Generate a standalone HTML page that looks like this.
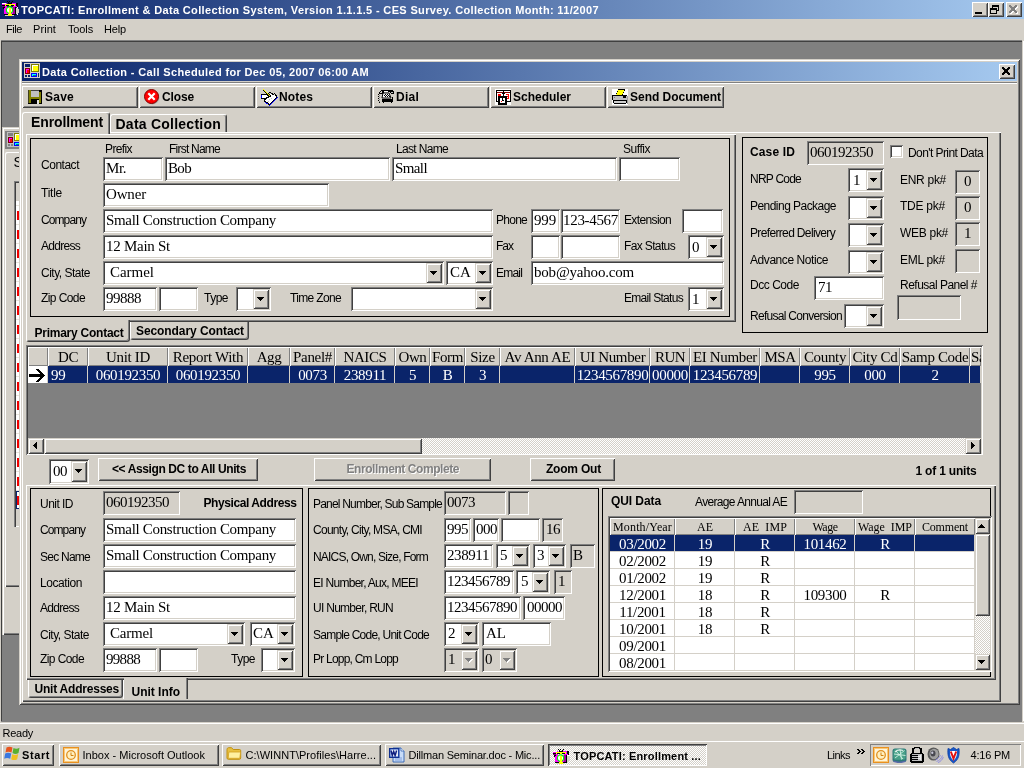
<!DOCTYPE html>
<html><head><meta charset="utf-8"><title>TOPCATI</title>
<style>
html,body{margin:0;padding:0;}
body{width:1024px;height:768px;overflow:hidden;position:relative;background:#d4d0c8;font-family:'Liberation Sans',sans-serif;font-size:12px;color:#000;}
div,span,svg{position:absolute;box-sizing:border-box;}
span{white-space:pre;}
.a{font-family:'Liberation Sans',sans-serif;}
.b{font-family:'Liberation Serif',serif;}
</style></head>
<body>
<div id="root" style="left:0;top:0;width:1024px;height:768px;will-change:transform;">
<div style="left:0px;top:0px;width:1024px;height:19px;background:linear-gradient(90deg,#0a246a 0%,#a6caf0 100%);"></div>
<span class="a" style="left:21px;top:4px;line-height:12px;font-size:11px;font-weight:700;color:#fff;letter-spacing:0.348px;">TOPCATI: Enrollment &amp; Data Collection System, Version 1.1.1.5 - CES Survey. Collection Month: 11/2007</span>
<div style="left:972px;top:2px;width:16px;height:15px;background:#d4d0c8;box-shadow:inset 1px 1px 0 #ffffff,inset -1px -1px 0 #404040,inset 2px 2px 0 #d4d0c8,inset -2px -2px 0 #808080;"></div>
<div style="left:988px;top:2px;width:16px;height:15px;background:#d4d0c8;box-shadow:inset 1px 1px 0 #ffffff,inset -1px -1px 0 #404040,inset 2px 2px 0 #d4d0c8,inset -2px -2px 0 #808080;"></div>
<div style="left:1006px;top:2px;width:16px;height:15px;background:#d4d0c8;box-shadow:inset 1px 1px 0 #ffffff,inset -1px -1px 0 #404040,inset 2px 2px 0 #d4d0c8,inset -2px -2px 0 #808080;"></div>
<div style="left:975px;top:12px;width:7px;height:2px;background:#000;"></div>
<svg style="left:990px;top:5px" width="9" height="9" shape-rendering="crispEdges"><rect x="2" y="0" width="7" height="1" fill="#000"/><rect x="2" y="1" width="7" height="1" fill="#000"/><rect x="2" y="2" width="1" height="1" fill="#000"/><rect x="8" y="2" width="1" height="1" fill="#000"/><rect x="0" y="3" width="7" height="1" fill="#000"/><rect x="8" y="3" width="1" height="1" fill="#000"/><rect x="0" y="4" width="7" height="1" fill="#000"/><rect x="8" y="4" width="1" height="1" fill="#000"/><rect x="0" y="5" width="1" height="1" fill="#000"/><rect x="6" y="5" width="3" height="1" fill="#000"/><rect x="0" y="6" width="1" height="1" fill="#000"/><rect x="6" y="6" width="1" height="1" fill="#000"/><rect x="0" y="7" width="1" height="1" fill="#000"/><rect x="6" y="7" width="1" height="1" fill="#000"/><rect x="0" y="8" width="7" height="1" fill="#000"/></svg>
<svg style="left:1010px;top:6px" width="8" height="8" shape-rendering="crispEdges"><rect x="0" y="0" width="2" height="1" fill="#fff"/><rect x="6" y="0" width="2" height="1" fill="#fff"/><rect x="0" y="1" width="3" height="1" fill="#fff"/><rect x="5" y="1" width="3" height="1" fill="#fff"/><rect x="1" y="2" width="6" height="1" fill="#fff"/><rect x="2" y="3" width="4" height="1" fill="#fff"/><rect x="2" y="4" width="4" height="1" fill="#fff"/><rect x="1" y="5" width="6" height="1" fill="#fff"/><rect x="0" y="6" width="3" height="1" fill="#fff"/><rect x="5" y="6" width="3" height="1" fill="#fff"/><rect x="0" y="7" width="2" height="1" fill="#fff"/><rect x="6" y="7" width="2" height="1" fill="#fff"/></svg>
<svg style="left:1009px;top:5px" width="8" height="8" shape-rendering="crispEdges"><rect x="0" y="0" width="2" height="1" fill="#808080"/><rect x="6" y="0" width="2" height="1" fill="#808080"/><rect x="0" y="1" width="3" height="1" fill="#808080"/><rect x="5" y="1" width="3" height="1" fill="#808080"/><rect x="1" y="2" width="6" height="1" fill="#808080"/><rect x="2" y="3" width="4" height="1" fill="#808080"/><rect x="2" y="4" width="4" height="1" fill="#808080"/><rect x="1" y="5" width="6" height="1" fill="#808080"/><rect x="0" y="6" width="3" height="1" fill="#808080"/><rect x="5" y="6" width="3" height="1" fill="#808080"/><rect x="0" y="7" width="2" height="1" fill="#808080"/><rect x="6" y="7" width="2" height="1" fill="#808080"/></svg>
<div style="left:0px;top:19px;width:1024px;height:21px;background:#d4d0c8;"></div>
<span class="a" style="left:6px;top:23px;line-height:12px;font-size:11px;letter-spacing:-0.434px;">File</span>
<span class="a" style="left:33px;top:23px;line-height:12px;font-size:11px;letter-spacing:0.075px;">Print</span>
<span class="a" style="left:68px;top:23px;line-height:12px;font-size:11px;letter-spacing:-0.138px;">Tools</span>
<span class="a" style="left:104px;top:23px;line-height:12px;font-size:11px;letter-spacing:-0.156px;">Help</span>
<div style="left:0px;top:40px;width:1024px;height:682px;background:#808080;"></div>
<div style="left:0px;top:40px;width:1px;height:682px;background:#d4d0c8;"></div>
<div style="left:1px;top:41px;width:1021px;height:1px;background:#404040;"></div>
<div style="left:1px;top:41px;width:1px;height:680px;background:#404040;"></div>
<div style="left:1022px;top:40px;width:2px;height:682px;background:#d4d0c8;"></div>
<div style="left:1023px;top:41px;width:1px;height:680px;background:#ffffff;"></div>
<div style="left:0px;top:722px;width:1024px;height:20px;background:#d4d0c8;"></div>
<div style="left:0px;top:723px;width:1024px;height:1px;background:#ffffff;"></div>
<span class="a" style="left:2.5px;top:727px;line-height:12px;font-size:11px;letter-spacing:-0.259px;">Ready</span>
<div style="left:0px;top:740px;width:1024px;height:28px;background:#d4d0c8;"></div>
<div style="left:0px;top:741px;width:1024px;height:1px;background:#ffffff;"></div>
<div style="left:2px;top:744px;width:52px;height:22px;background:#d4d0c8;box-shadow:inset 1px 1px 0 #ffffff,inset -1px -1px 0 #404040,inset 2px 2px 0 #d4d0c8,inset -2px -2px 0 #808080;"></div>
<span class="a" style="left:22px;top:749px;line-height:12px;font-size:11px;font-weight:700;letter-spacing:0.588px;">Start</span>
<div style="left:59px;top:744px;width:160px;height:22px;background:#d4d0c8;box-shadow:inset 1px 1px 0 #ffffff,inset -1px -1px 0 #404040,inset 2px 2px 0 #d4d0c8,inset -2px -2px 0 #808080;"></div>
<span class="a" style="left:82.5px;top:749px;line-height:12px;font-size:11px;letter-spacing:0.009px;">Inbox - Microsoft Outlook</span>
<div style="left:222px;top:744px;width:159px;height:22px;background:#d4d0c8;box-shadow:inset 1px 1px 0 #ffffff,inset -1px -1px 0 #404040,inset 2px 2px 0 #d4d0c8,inset -2px -2px 0 #808080;"></div>
<span class="a" style="left:245.5px;top:749px;line-height:12px;font-size:11px;letter-spacing:0.035px;">C:\WINNT\Profiles\Harre...</span>
<div style="left:385px;top:744px;width:159px;height:22px;background:#d4d0c8;box-shadow:inset 1px 1px 0 #ffffff,inset -1px -1px 0 #404040,inset 2px 2px 0 #d4d0c8,inset -2px -2px 0 #808080;"></div>
<span class="a" style="left:408.5px;top:749px;line-height:12px;font-size:11px;letter-spacing:-0.194px;">Dillman Seminar.doc - Mic...</span>
<div style="left:548px;top:744px;width:159px;height:22px;background-color:#fff;background-image:linear-gradient(45deg,#d4d0c8 25%,transparent 25%,transparent 75%,#d4d0c8 75%),linear-gradient(45deg,#d4d0c8 25%,transparent 25%,transparent 75%,#d4d0c8 75%);background-size:2px 2px;background-position:0 0,1px 1px;box-shadow:inset 1px 1px 0 #404040,inset -1px -1px 0 #ffffff,inset 2px 2px 0 #808080;"></div>
<span class="a" style="left:573.5px;top:750px;line-height:12px;font-size:11px;font-weight:700;letter-spacing:0.167px;">TOPCATI: Enrollment ...</span>
<span class="a" style="left:827px;top:749px;line-height:12px;font-size:11px;letter-spacing:-0.537px;">Links</span>
<svg style="left:857px;top:749px" width="9" height="5" shape-rendering="crispEdges"><rect x="0" y="0" width="2" height="1" fill="#000"/><rect x="4" y="0" width="2" height="1" fill="#000"/><rect x="1" y="1" width="2" height="1" fill="#000"/><rect x="5" y="1" width="2" height="1" fill="#000"/><rect x="2" y="2" width="2" height="1" fill="#000"/><rect x="6" y="2" width="2" height="1" fill="#000"/><rect x="1" y="3" width="2" height="1" fill="#000"/><rect x="5" y="3" width="2" height="1" fill="#000"/><rect x="0" y="4" width="2" height="1" fill="#000"/><rect x="4" y="4" width="2" height="1" fill="#000"/></svg>
<div style="left:870px;top:744px;width:151px;height:22px;box-shadow:inset 1px 1px 0 #808080,inset -1px -1px 0 #ffffff;"></div>
<span class="a" style="left:970.5px;top:749px;line-height:12px;font-size:11px;letter-spacing:-0.21px;">4:16 PM</span>
<svg style="left:4px;top:746px" width="16" height="15" viewBox="0 0 16 15"><path d="M2.5 1.5c2-1.2 4-1 6 0l-1 5c-2-1-4-1.2-6 0z" fill="#e8541c"/><path d="M9.5 2c2 1 4 1 6-.3l-1 5.3c-2 1.2-4 1.2-6 0z" fill="#58b030"/><path d="M1.2 7.5c2-1.2 4-1 6 0l-1 5.3c-2-1-4-1.2-6 0z" fill="#3a78e0"/><path d="M8.2 8.2c2 1 4 1 6-.3l-1 5.3c-2 1.2-4 1.2-6 0z" fill="#f0c020"/></svg>
<svg style="left:63px;top:747px" width="16" height="16" viewBox="0 0 16 16"><rect x="0" y="0" width="16" height="16" fill="#e89020"/><rect x="1" y="1" width="14" height="14" fill="#f8c878"/><rect x="2" y="2" width="12" height="12" fill="#fff4d8"/><circle cx="8" cy="8" r="4.3" fill="#fff0c0" stroke="#e09020" stroke-width="1.3"/><path d="M8 5.5v3h2.5" stroke="#d08010" stroke-width="1" fill="none"/></svg>
<svg style="left:226px;top:747px" width="16" height="14" viewBox="0 0 16 14"><path d="M1 2.5c0-1 .6-1.8 1.6-1.8h3l1.6 1.8h6.3c.8 0 1.2.5 1.2 1.2v7.3c0 .8-.5 1.3-1.3 1.3h-11c-.9 0-1.4-.5-1.4-1.300z" fill="#e8c040" stroke="#c09010" stroke-width="1"/><path d="M2.8 5h11.800l-.8 6.300h-11.600z" fill="#fff0a0" stroke="#d0a020" stroke-width=".8"/></svg>
<svg style="left:389px;top:747px" width="16" height="16" viewBox="0 0 16 16"><path d="M4 1h8l3 3v11h-11z" fill="#c8dcf8" stroke="#3060b0" stroke-width=".9"/><path d="M12 1v3h3" fill="#fff" stroke="#3060b0" stroke-width=".8"/><path d="M6 11h7M6 13h7" stroke="#7090d0" stroke-width=".8"/><rect x=".5" y="1.5" width="9.500" height="9" fill="#2050c0" stroke="#103090" stroke-width="1"/><rect x="1.5" y="2.5" width="7.500" height="7" fill="#fff" opacity=".9"/><path d="M2 3.500l1.300 5 1.400-4 1.400 4 1.500-5" fill="none" stroke="#102080" stroke-width="1.500"/></svg>
<svg style="left:553px;top:749px" width="17" height="16" viewBox="0 0 17 16" shape-rendering="crispEdges"><path d="M5 0h1v1h-1zM7 0h1v1h-1zM10 0h1v1h-1zM6 1h1v1h-1zM9 1h1v1h-1zM6 2h4v1h-4z" fill="#000"/><rect x="0" y="2" width="5" height="4" fill="#ff00ff"/><rect x="0" y="2" width="4" height="1" fill="#fff"/><rect x="0" y="4" width="4" height="1" fill="#000"/><rect x="0" y="5" width="3" height="1" fill="#800080"/><rect x="10" y="2" width="5" height="3" fill="#ff00ff"/><rect x="14" y="2" width="2" height="4" fill="#000"/><rect x="11" y="5" width="4" height="1" fill="#ff00ff"/><rect x="2" y="6" width="10" height="7" fill="#ff00ff"/><rect x="11" y="6" width="2" height="7" fill="#a000a0"/><path d="M1 6h2v1h-1v1h-1z" fill="#000"/><rect x="3" y="3" width="10" height="2" fill="#ffff00"/><rect x="4" y="4" width="3" height="1" fill="#000"/><rect x="9" y="4" width="3" height="1" fill="#000"/><rect x="2" y="13" width="12" height="1" fill="#000"/><rect x="13" y="6" width="1" height="7" fill="#000"/><path d="M14 7h2v1h1v4h-1v1h-2z" fill="#d4d0c8"/><path d="M15 6h1v1h-1zM15 13h1v1h-1z" fill="#fff"/><circle cx="7.5" cy="9" r="3.1" fill="#fff" stroke="#00ff00" stroke-width="1.1" shape-rendering="auto"/><rect x="7" y="6.5" width="2" height="8" fill="#ffff00"/><rect x="6" y="13" width="4" height="2" fill="#ffff00"/><rect x="3" y="14" width="3" height="1" fill="#d4d0c8"/><rect x="10" y="14" width="2" height="1" fill="#d4d0c8"/></svg>
<svg style="left:873px;top:747px" width="16" height="16" viewBox="0 0 16 16"><rect x="0" y="0" width="16" height="16" fill="#e89020"/><rect x="1" y="1" width="14" height="14" fill="#f8c878"/><rect x="2" y="2" width="12" height="12" fill="#fff4d8"/><circle cx="8" cy="8" r="4.3" fill="#fff0c0" stroke="#e09020" stroke-width="1.3"/><path d="M8 5.5v3h2.5" stroke="#d08010" stroke-width="1" fill="none"/></svg>
<svg style="left:892px;top:747.5px" width="15" height="15.5" viewBox="0 0 15 15.5"><rect x=".5" y=".5" width="14" height="13.500" rx="2.500" fill="#2c7878"/><rect x="1.500" y="1.200" width="12" height="10.500" rx="2" fill="#48a088"/><path d="M3 10l9.500-7.500M4 3l7 8M8 1.500l1.500 10M2 6l11.500 1.500" stroke="#e8fff4" stroke-width=".9" opacity=".85"/><path d="M3 4c2-2 5-2.500 8-1.500" stroke="#fff" stroke-width="1.200" fill="none" opacity=".8"/><path d="M1.500 12.500c4 1.500 8 1.500 12 0v1.500c-4 1.500-8 1.500-12 0z" fill="#5868a8"/></svg>
<svg style="left:910px;top:747px" width="14" height="16" shape-rendering="crispEdges"><rect x="4" y="0" width="6" height="1" fill="#000"/><rect x="2" y="1" width="3" height="1" fill="#000"/><rect x="5" y="1" width="4" height="1" fill="#c0c0c0"/><rect x="9" y="1" width="3" height="1" fill="#000"/><rect x="2" y="2" width="2" height="1" fill="#000"/><rect x="4" y="2" width="1" height="1" fill="#c0c0c0"/><rect x="9" y="2" width="1" height="1" fill="#c0c0c0"/><rect x="10" y="2" width="2" height="1" fill="#000"/><rect x="2" y="3" width="2" height="1" fill="#000"/><rect x="10" y="3" width="2" height="1" fill="#000"/><rect x="2" y="4" width="2" height="1" fill="#000"/><rect x="10" y="4" width="2" height="1" fill="#000"/><rect x="2" y="5" width="2" height="1" fill="#000"/><rect x="10" y="5" width="2" height="1" fill="#000"/><rect x="1" y="6" width="12" height="1" fill="#000"/><rect x="0" y="7" width="2" height="1" fill="#000"/><rect x="2" y="7" width="10" height="1" fill="#c0c0c0"/><rect x="12" y="7" width="2" height="1" fill="#000"/><rect x="0" y="8" width="8" height="1" fill="#000"/><rect x="8" y="8" width="2" height="1" fill="#c0c0c0"/><rect x="10" y="8" width="1" height="1" fill="#f0f0f0"/><rect x="11" y="8" width="1" height="1" fill="#c0c0c0"/><rect x="12" y="8" width="2" height="1" fill="#000"/><rect x="0" y="9" width="2" height="1" fill="#000"/><rect x="2" y="9" width="6" height="1" fill="#c0c0c0"/><rect x="8" y="9" width="3" height="1" fill="#f0f0f0"/><rect x="11" y="9" width="1" height="1" fill="#c0c0c0"/><rect x="12" y="9" width="2" height="1" fill="#000"/><rect x="0" y="10" width="8" height="1" fill="#000"/><rect x="8" y="10" width="2" height="1" fill="#c0c0c0"/><rect x="10" y="10" width="1" height="1" fill="#f0f0f0"/><rect x="11" y="10" width="1" height="1" fill="#c0c0c0"/><rect x="12" y="10" width="2" height="1" fill="#000"/><rect x="0" y="11" width="2" height="1" fill="#000"/><rect x="2" y="11" width="6" height="1" fill="#c0c0c0"/><rect x="8" y="11" width="3" height="1" fill="#f0f0f0"/><rect x="11" y="11" width="1" height="1" fill="#c0c0c0"/><rect x="12" y="11" width="2" height="1" fill="#000"/><rect x="0" y="12" width="8" height="1" fill="#000"/><rect x="8" y="12" width="2" height="1" fill="#c0c0c0"/><rect x="10" y="12" width="1" height="1" fill="#f0f0f0"/><rect x="11" y="12" width="1" height="1" fill="#c0c0c0"/><rect x="12" y="12" width="2" height="1" fill="#000"/><rect x="0" y="13" width="2" height="1" fill="#000"/><rect x="2" y="13" width="10" height="1" fill="#c0c0c0"/><rect x="12" y="13" width="2" height="1" fill="#000"/><rect x="0" y="14" width="14" height="1" fill="#000"/><rect x="1" y="15" width="12" height="1" fill="#000"/></svg>
<svg style="left:927px;top:747px" width="17" height="16" viewBox="0 0 17 16"><ellipse cx="6.500" cy="7" rx="6" ry="6.600" fill="#585858"/><ellipse cx="7" cy="7" rx="4.600" ry="5.300" fill="#a0a0a0"/><ellipse cx="6" cy="6.500" rx="2.500" ry="3" fill="#484850"/><ellipse cx="5.300" cy="5.800" rx="1.100" ry="1.300" fill="#c8c8d8"/><path d="M9.500 14.500c3-1 5-3 6-6M8.500 13c2-.8 4-2.500 5-5M11 15.600c2.500-1 4.500-3 5.300-5.500" fill="none" stroke="#8888e0" stroke-width=".9"/></svg>
<svg style="left:946.5px;top:746.5px" width="13" height="17" viewBox="0 0 13 17"><path d="M1 1.500l2.500 1 3-2 3 2 2.500-1c.5 6 0 11-5.500 14.500c-5.500-3.500-6-8.500-5.500-14.500z" fill="#1858c8" stroke="#0838a0" stroke-width=".8"/><path d="M3 4h7c.2 4-.5 7-3.500 9.500c-3-2.500-3.700-5.500-3.500-9.500z" fill="#fff"/><path d="M3.800 4.500l2.700 7 2.700-7" fill="none" stroke="#e01010" stroke-width="2"/></svg>
<div style="left:2px;top:127px;width:20px;height:508px;background:#d4d0c8;box-shadow:inset 1px 1px 0 #d4d0c8,inset 2px 2px 0 #ffffff,inset 0 -1px 0 #404040,inset 0 -2px 0 #808080;"></div>
<div style="left:5px;top:131px;width:16px;height:18px;background:#808080;"></div>
<div style="left:7px;top:132px;width:14px;height:15px;background:#c0c0c0;"></div>
<svg style="left:7px;top:132px" width="16" height="15" viewBox="0 0 16 15" shape-rendering="crispEdges"><rect x="0" y="0" width="16" height="15" fill="#c0c0c0"/><rect x="1" y="1" width="5" height="3" fill="#808080"/><rect x="7" y="1" width="8" height="8" fill="#808000"/><rect x="8" y="2" width="6" height="6" fill="#ffff00"/><path d="M8 2h6v1h-5v5h-1z" fill="#fff"/><rect x="1" y="5" width="5" height="6" fill="#800000"/><rect x="2" y="6" width="3" height="4" fill="#ff0000"/><path d="M2 6h3v1h-2v3h-1z" fill="#ff00ff"/><rect x="7" y="10" width="6" height="4" fill="#0000ff"/><rect x="8" y="11" width="4" height="2" fill="#008080"/><path d="M8 11h4v1h-3v1h-1z" fill="#00ffff"/><rect x="1" y="12" width="2" height="2" fill="#808080"/><rect x="4" y="12" width="2" height="2" fill="#808080"/><rect x="14" y="10" width="1" height="4" fill="#808080"/></svg>
<div style="left:5px;top:152px;width:16px;height:435px;box-shadow:inset 1px 1px 0 #ffffff,inset 0 -1px 0 #404040,inset 0 -2px 0 #808080;border-radius:2px 0 0 0;"></div>
<span class="a" style="left:13.5px;top:154px;line-height:16px;font-size:14px;">S</span>
<div style="left:14px;top:181px;width:8px;height:346px;background:#d4d0c8;box-shadow:inset 1px 1px 0 #808080,inset 2px 2px 0 #404040,inset 0 -1px 0 #ffffff;"></div>
<div style="left:16px;top:201px;width:5px;height:308px;background:#fff;"></div>
<div style="left:16px;top:205px;width:5px;height:1px;background:#e8e4dc;"></div>
<div style="left:17px;top:211px;width:2px;height:9px;background:#f00000;"></div>
<div style="left:16px;top:224px;width:5px;height:1px;background:#e8e4dc;"></div>
<div style="left:17px;top:230px;width:2px;height:9px;background:#f00000;"></div>
<div style="left:16px;top:243px;width:5px;height:1px;background:#e8e4dc;"></div>
<div style="left:17px;top:249px;width:2px;height:9px;background:#f00000;"></div>
<div style="left:16px;top:262px;width:5px;height:1px;background:#e8e4dc;"></div>
<div style="left:17px;top:268px;width:2px;height:9px;background:#f00000;"></div>
<div style="left:16px;top:281px;width:5px;height:1px;background:#e8e4dc;"></div>
<div style="left:17px;top:287px;width:2px;height:9px;background:#f00000;"></div>
<div style="left:16px;top:300px;width:5px;height:1px;background:#e8e4dc;"></div>
<div style="left:17px;top:306px;width:2px;height:9px;background:#f00000;"></div>
<div style="left:16px;top:319px;width:5px;height:1px;background:#e8e4dc;"></div>
<div style="left:17px;top:325px;width:2px;height:9px;background:#f00000;"></div>
<div style="left:16px;top:338px;width:5px;height:1px;background:#e8e4dc;"></div>
<div style="left:17px;top:344px;width:2px;height:9px;background:#f00000;"></div>
<div style="left:16px;top:357px;width:5px;height:1px;background:#e8e4dc;"></div>
<div style="left:17px;top:363px;width:2px;height:9px;background:#f00000;"></div>
<div style="left:16px;top:376px;width:5px;height:1px;background:#e8e4dc;"></div>
<div style="left:17px;top:382px;width:2px;height:9px;background:#f00000;"></div>
<div style="left:16px;top:395px;width:5px;height:1px;background:#e8e4dc;"></div>
<div style="left:17px;top:401px;width:2px;height:9px;background:#f00000;"></div>
<div style="left:16px;top:414px;width:5px;height:1px;background:#e8e4dc;"></div>
<div style="left:17px;top:420px;width:2px;height:9px;background:#f00000;"></div>
<div style="left:16px;top:433px;width:5px;height:1px;background:#e8e4dc;"></div>
<div style="left:17px;top:439px;width:2px;height:9px;background:#f00000;"></div>
<div style="left:16px;top:452px;width:5px;height:1px;background:#e8e4dc;"></div>
<div style="left:17px;top:458px;width:2px;height:9px;background:#f00000;"></div>
<div style="left:16px;top:471px;width:5px;height:1px;background:#e8e4dc;"></div>
<div style="left:17px;top:477px;width:2px;height:9px;background:#f00000;"></div>
<div style="left:16px;top:490px;width:5px;height:1px;background:#e8e4dc;"></div>
<div style="left:17px;top:496px;width:2px;height:9px;background:#f00000;"></div>
<div style="left:16px;top:491px;width:5px;height:18px;border:1px solid #0a246a;border-right:none;"></div>
<div style="left:19px;top:59px;width:1001px;height:646px;background:#d4d0c8;box-shadow:inset 1px 1px 0 #d4d0c8,inset -1px -1px 0 #404040,inset 2px 2px 0 #ffffff,inset -2px -2px 0 #808080;"></div>
<div style="left:22px;top:62px;width:995px;height:19px;background:linear-gradient(90deg,#0a246a 0%,#a6caf0 100%);"></div>
<span class="a" style="left:42px;top:66px;line-height:12px;font-size:11px;font-weight:700;color:#fff;letter-spacing:0.354px;">Data Collection - Call Scheduled for Dec 05, 2007 06:00 AM</span>
<div style="left:999px;top:64px;width:16px;height:15px;background:#d4d0c8;box-shadow:inset 1px 1px 0 #ffffff,inset -1px -1px 0 #404040,inset 2px 2px 0 #d4d0c8,inset -2px -2px 0 #808080;"></div>
<svg style="left:1002px;top:67px" width="8" height="8" shape-rendering="crispEdges"><rect x="0" y="0" width="2" height="1" fill="#000"/><rect x="6" y="0" width="2" height="1" fill="#000"/><rect x="0" y="1" width="3" height="1" fill="#000"/><rect x="5" y="1" width="3" height="1" fill="#000"/><rect x="1" y="2" width="6" height="1" fill="#000"/><rect x="2" y="3" width="4" height="1" fill="#000"/><rect x="2" y="4" width="4" height="1" fill="#000"/><rect x="1" y="5" width="6" height="1" fill="#000"/><rect x="0" y="6" width="3" height="1" fill="#000"/><rect x="5" y="6" width="3" height="1" fill="#000"/><rect x="0" y="7" width="2" height="1" fill="#000"/><rect x="6" y="7" width="2" height="1" fill="#000"/></svg>
<div style="left:22px;top:82px;width:995px;height:1px;background:#808080;"></div>
<div style="left:22px;top:83px;width:995px;height:1px;background:#ffffff;"></div>
<div style="left:22px;top:86px;width:116px;height:22px;background:#d4d0c8;box-shadow:inset 1px 1px 0 #ffffff,inset -1px -1px 0 #404040,inset 2px 2px 0 #d4d0c8,inset -2px -2px 0 #808080;"></div>
<span class="a" style="left:45px;top:90px;line-height:14px;font-size:12px;font-weight:700;letter-spacing:0.242px;">Save</span>
<div style="left:139px;top:86px;width:116px;height:22px;background:#d4d0c8;box-shadow:inset 1px 1px 0 #ffffff,inset -1px -1px 0 #404040,inset 2px 2px 0 #d4d0c8,inset -2px -2px 0 #808080;"></div>
<span class="a" style="left:162px;top:90px;line-height:14px;font-size:12px;font-weight:700;letter-spacing:-0.138px;">Close</span>
<div style="left:256px;top:86px;width:116px;height:22px;background:#d4d0c8;box-shadow:inset 1px 1px 0 #ffffff,inset -1px -1px 0 #404040,inset 2px 2px 0 #d4d0c8,inset -2px -2px 0 #808080;"></div>
<span class="a" style="left:279px;top:90px;line-height:14px;font-size:12px;font-weight:700;letter-spacing:0.131px;">Notes</span>
<div style="left:373px;top:86px;width:116px;height:22px;background:#d4d0c8;box-shadow:inset 1px 1px 0 #ffffff,inset -1px -1px 0 #404040,inset 2px 2px 0 #d4d0c8,inset -2px -2px 0 #808080;"></div>
<span class="a" style="left:396px;top:90px;line-height:14px;font-size:12px;font-weight:700;letter-spacing:0.246px;">Dial</span>
<div style="left:490px;top:86px;width:116px;height:22px;background:#d4d0c8;box-shadow:inset 1px 1px 0 #ffffff,inset -1px -1px 0 #404040,inset 2px 2px 0 #d4d0c8,inset -2px -2px 0 #808080;"></div>
<span class="a" style="left:513px;top:90px;line-height:14px;font-size:12px;font-weight:700;letter-spacing:-0.003px;">Scheduler</span>
<div style="left:607px;top:86px;width:117px;height:22px;background:#d4d0c8;box-shadow:inset 1px 1px 0 #ffffff,inset -1px -1px 0 #404040,inset 2px 2px 0 #d4d0c8,inset -2px -2px 0 #808080;"></div>
<span class="a" style="left:630px;top:90px;line-height:14px;font-size:12px;font-weight:700;letter-spacing:-0.026px;">Send Document</span>
<svg style="left:2px;top:1px" width="17" height="16" viewBox="0 0 17 16" shape-rendering="crispEdges"><path d="M5 0h1v1h-1zM7 0h1v1h-1zM10 0h1v1h-1zM6 1h1v1h-1zM9 1h1v1h-1zM6 2h4v1h-4z" fill="#000"/><rect x="0" y="2" width="5" height="4" fill="#ff00ff"/><rect x="0" y="2" width="4" height="1" fill="#fff"/><rect x="0" y="4" width="4" height="1" fill="#000"/><rect x="0" y="5" width="3" height="1" fill="#800080"/><rect x="10" y="2" width="5" height="3" fill="#ff00ff"/><rect x="14" y="2" width="2" height="4" fill="#000"/><rect x="11" y="5" width="4" height="1" fill="#ff00ff"/><rect x="2" y="6" width="10" height="7" fill="#ff00ff"/><rect x="11" y="6" width="2" height="7" fill="#a000a0"/><path d="M1 6h2v1h-1v1h-1z" fill="#000"/><rect x="3" y="3" width="10" height="2" fill="#ffff00"/><rect x="4" y="4" width="3" height="1" fill="#000"/><rect x="9" y="4" width="3" height="1" fill="#000"/><rect x="2" y="13" width="12" height="1" fill="#000"/><rect x="13" y="6" width="1" height="7" fill="#000"/><path d="M14 7h2v1h1v4h-1v1h-2z" fill="#d4d0c8"/><path d="M15 6h1v1h-1zM15 13h1v1h-1z" fill="#fff"/><circle cx="7.5" cy="9" r="3.1" fill="#fff" stroke="#00ff00" stroke-width="1.1" shape-rendering="auto"/><rect x="7" y="6.5" width="2" height="8" fill="#ffff00"/><rect x="6" y="13" width="4" height="2" fill="#ffff00"/><rect x="3" y="14" width="3" height="1" fill="#d4d0c8"/><rect x="10" y="14" width="2" height="1" fill="#d4d0c8"/></svg>
<svg style="left:24px;top:63px" width="16" height="15" viewBox="0 0 16 15" shape-rendering="crispEdges"><rect x="0" y="0" width="16" height="15" fill="#d4d0c8"/><rect x="1" y="1" width="5" height="3" fill="#0a246a"/><rect x="7" y="1" width="8" height="8" fill="#808000"/><rect x="8" y="2" width="6" height="6" fill="#ffff00"/><path d="M8 2h6v1h-5v5h-1z" fill="#fff"/><rect x="1" y="5" width="5" height="6" fill="#800000"/><rect x="2" y="6" width="3" height="4" fill="#ff0000"/><path d="M2 6h3v1h-2v3h-1z" fill="#ff00ff"/><rect x="7" y="10" width="6" height="4" fill="#0000ff"/><rect x="8" y="11" width="4" height="2" fill="#008080"/><path d="M8 11h4v1h-3v1h-1z" fill="#00ffff"/><rect x="1" y="12" width="2" height="2" fill="#0a246a"/><rect x="4" y="12" width="2" height="2" fill="#0a246a"/><rect x="14" y="10" width="1" height="4" fill="#0a246a"/></svg>
<svg style="left:28px;top:90px" width="14" height="14" viewBox="0 0 14 14" shape-rendering="crispEdges"><rect x="0" y="0" width="14" height="14" fill="#808000"/><rect x="0" y="0" width="1" height="14" fill="#404020"/><rect x="13" y="0" width="1" height="14" fill="#000"/><rect x="0" y="13" width="14" height="1" fill="#000"/><rect x="3" y="0" width="8" height="7" fill="#c0c0c0"/><rect x="3" y="0" width="8" height="1" fill="#404040"/><rect x="11" y="0" width="2" height="2" fill="#000"/><rect x="3" y="9" width="8" height="5" fill="#000"/><rect x="9" y="10" width="2" height="4" fill="#e0e0e0"/></svg>
<svg style="left:144px;top:89px" width="17" height="17" viewBox="0 0 17 17"><circle cx="8.4" cy="8.4" r="7" fill="#808080" opacity=".5"/><circle cx="7.5" cy="7.5" r="7" fill="#ff0000" stroke="#800000" stroke-width="1"/><path d="M4.3 4.3l6.4 6.4M10.7 4.3l-6.4 6.4" stroke="#fff" stroke-width="2.2"/></svg>
<svg style="left:260px;top:88px" width="19" height="18" shape-rendering="crispEdges"><rect x="3" y="1" width="1" height="1" fill="#ffff00"/><rect x="3" y="2" width="1" height="1" fill="#000"/><rect x="4" y="2" width="1" height="1" fill="#ffff00"/><rect x="4" y="3" width="1" height="1" fill="#000"/><rect x="5" y="3" width="1" height="1" fill="#ffff00"/><rect x="5" y="4" width="1" height="1" fill="#000"/><rect x="6" y="4" width="1" height="1" fill="#ffff00"/><rect x="9" y="4" width="2" height="1" fill="#000"/><rect x="6" y="5" width="1" height="1" fill="#000"/><rect x="7" y="5" width="1" height="1" fill="#ffff00"/><rect x="8" y="5" width="1" height="1" fill="#000"/><rect x="11" y="5" width="2" height="1" fill="#000"/><rect x="14" y="5" width="1" height="1" fill="#000"/><rect x="1" y="6" width="7" height="1" fill="#000"/><rect x="8" y="6" width="1" height="1" fill="#ffff00"/><rect x="9" y="6" width="1" height="1" fill="#000"/><rect x="10" y="6" width="2" height="1" fill="#fff"/><rect x="12" y="6" width="2" height="1" fill="#000"/><rect x="15" y="6" width="1" height="1" fill="#000"/><rect x="1" y="7" width="1" height="1" fill="#0000ff"/><rect x="2" y="7" width="5" height="1" fill="#fff"/><rect x="7" y="7" width="2" height="1" fill="#000"/><rect x="9" y="7" width="1" height="1" fill="#ffff00"/><rect x="10" y="7" width="1" height="1" fill="#000"/><rect x="11" y="7" width="4" height="1" fill="#fff"/><rect x="15" y="7" width="2" height="1" fill="#000"/><rect x="1" y="8" width="1" height="1" fill="#0000ff"/><rect x="2" y="8" width="6" height="1" fill="#fff"/><rect x="8" y="8" width="3" height="1" fill="#000"/><rect x="11" y="8" width="5" height="1" fill="#fff"/><rect x="16" y="8" width="1" height="1" fill="#000"/><rect x="1" y="9" width="1" height="1" fill="#0000ff"/><rect x="2" y="9" width="4" height="1" fill="#fff"/><rect x="6" y="9" width="3" height="1" fill="#000"/><rect x="9" y="9" width="7" height="1" fill="#fff"/><rect x="16" y="9" width="1" height="1" fill="#000"/><rect x="17" y="9" width="1" height="1" fill="#0000ff"/><rect x="1" y="10" width="6" height="1" fill="#000"/><rect x="7" y="10" width="4" height="1" fill="#fff"/><rect x="11" y="10" width="1" height="1" fill="#c0c0c0"/><rect x="12" y="10" width="3" height="1" fill="#fff"/><rect x="15" y="10" width="1" height="1" fill="#000"/><rect x="16" y="10" width="1" height="1" fill="#0000ff"/><rect x="4" y="11" width="2" height="1" fill="#000"/><rect x="6" y="11" width="3" height="1" fill="#fff"/><rect x="9" y="11" width="1" height="1" fill="#c0c0c0"/><rect x="10" y="11" width="4" height="1" fill="#fff"/><rect x="14" y="11" width="1" height="1" fill="#000"/><rect x="15" y="11" width="1" height="1" fill="#0000ff"/><rect x="4" y="12" width="1" height="1" fill="#000"/><rect x="5" y="12" width="8" height="1" fill="#fff"/><rect x="13" y="12" width="1" height="1" fill="#000"/><rect x="14" y="12" width="1" height="1" fill="#0000ff"/><rect x="4" y="13" width="2" height="1" fill="#000"/><rect x="6" y="13" width="2" height="1" fill="#fff"/><rect x="8" y="13" width="1" height="1" fill="#c0c0c0"/><rect x="9" y="13" width="3" height="1" fill="#fff"/><rect x="12" y="13" width="1" height="1" fill="#000"/><rect x="13" y="13" width="1" height="1" fill="#0000ff"/><rect x="5" y="14" width="1" height="1" fill="#0000ff"/><rect x="6" y="14" width="2" height="1" fill="#000"/><rect x="8" y="14" width="3" height="1" fill="#fff"/><rect x="11" y="14" width="1" height="1" fill="#000"/><rect x="12" y="14" width="1" height="1" fill="#0000ff"/><rect x="6" y="15" width="2" height="1" fill="#0000ff"/><rect x="8" y="15" width="1" height="1" fill="#000"/><rect x="9" y="15" width="1" height="1" fill="#fff"/><rect x="10" y="15" width="1" height="1" fill="#000"/><rect x="11" y="15" width="1" height="1" fill="#0000ff"/><rect x="8" y="16" width="2" height="1" fill="#000"/><rect x="10" y="16" width="1" height="1" fill="#0000ff"/><rect x="9" y="17" width="1" height="1" fill="#0000ff"/></svg>
<svg style="left:377px;top:89px" width="18" height="15" viewBox="0 0 18 15" shape-rendering="crispEdges"><path d="M6 1h7v2h-7z" fill="#000"/><path d="M2 3l3-2h2v3l-2 1h-3z" fill="#000"/><path d="M12 1h3l2 2v2h-3l-1-1z" fill="#000"/><rect x="7" y="2" width="4" height="1" fill="#fff"/><path d="M3 3l1-1h1v1l-1 1h-1z" fill="#d4d0c8"/><rect x="14" y="3" width="2" height="1" fill="#c0c0c0"/><path d="M6 4h6l2 5h-9z" fill="#fff" stroke="#000" stroke-width="1" shape-rendering="auto"/><path d="M8 5h1v1h-1zM10 5h1v1h-1zM7 6h1v1h-1zM9 6h1v1h-1zM11 6h1v1h-1zM8 7h1v1h-1zM10 7h1v1h-1zM12 7h1v1h-1z" fill="#000"/><rect x="5" y="10" width="11" height="3" fill="#000"/><rect x="15" y="8" width="1" height="3" fill="#000"/><rect x="6" y="13" width="1" height="1" fill="#000"/><rect x="14" y="13" width="1" height="1" fill="#000"/><path d="M1 5h1v1h-1zM1 7h1v1h-1zM1 9h1v1h-1zM1 11h1v1h-1zM2 13h1v1h-1z" fill="#000"/><path d="M2 6h1v1h-1zM2 8h1v1h-1zM2 10h1v1h-1zM2 12h1v1h-1z" fill="#808080"/></svg>
<svg style="left:495px;top:89px" width="16" height="16" viewBox="0 0 16 16" shape-rendering="crispEdges"><rect x="0" y="0" width="16" height="16" fill="#fff"/><rect x="1.5" y="1.5" width="14" height="11" fill="#fff" stroke="#000" stroke-width="1"/><rect x="2" y="3" width="13" height="1" fill="#800000"/><rect x="8" y="1" width="1" height="6" fill="#000"/><rect x="7" y="4" width="3" height="1" fill="#000"/><path d="M3 5h3v2h-3z" fill="#ff0000"/><path d="M11 5h3v5h-2v-1h1v-1h-1v-1h1v-1h-2z" fill="#ff0000"/><rect x="3" y="7" width="9" height="9" fill="#000"/><rect x="5" y="9" width="5" height="5" fill="#fff"/><path d="M7 9h1v2h1v1h-2z" fill="#000"/><rect x="6" y="12" width="1" height="1" fill="#ff0000"/></svg>
<svg style="left:612px;top:89px" width="16" height="16" viewBox="0 0 16 16" shape-rendering="crispEdges"><rect x="0" y="0" width="16" height="16" fill="#fff"/><path d="M6 0.5h6.5l-2 6h-6.5z" fill="#ffff00" shape-rendering="auto"/><rect x="6" y="0" width="7" height="1" fill="#000"/><rect x="12" y="1" width="1" height="1" fill="#000"/><path d="M5 2h1v1h-1zM4 4h1v1h-1zM11 3h1v1h-1zM10 5h1v1h-1z" fill="#000"/><rect x="0" y="6" width="15" height="1" fill="#000"/><rect x="0" y="6" width="1" height="5" fill="#000"/><rect x="1" y="7" width="14" height="4" fill="#c0c0c0"/><rect x="11" y="7" width="3" height="2" fill="#000"/><rect x="2" y="8" width="1" height="1" fill="#808080"/><rect x="1" y="11" width="14" height="1" fill="#000"/><rect x="1" y="12" width="1" height="2" fill="#000"/><rect x="14" y="11" width="1" height="3" fill="#000"/><rect x="2" y="12" width="12" height="2" fill="#d0d0d0"/><rect x="2" y="14" width="12" height="1" fill="#000"/><rect x="15" y="7" width="1" height="8" fill="#a0a0a0"/></svg>
<div style="left:22px;top:132px;width:979px;height:570px;background:#d4d0c8;box-shadow:inset 1px 1px 0 #ffffff,inset -1px -1px 0 #404040,inset -2px -2px 0 #808080;"></div>
<div style="left:22px;top:112px;width:88px;height:22px;background:#d4d0c8;border:1px solid;border-color:#ffffff #404040 #d4d0c8 #ffffff;border-bottom:none;border-radius:3px 3px 0 0;box-shadow:inset -1px 0 0 #808080;"></div>
<span class="a" style="left:31px;top:114px;line-height:16px;font-size:14px;font-weight:700;letter-spacing:-0.113px;">Enrollment</span>
<div style="left:110px;top:114px;width:117px;height:18px;background:#d4d0c8;border:1px solid;border-color:#ffffff #404040 #d4d0c8 #ffffff;border-bottom:none;border-radius:3px 3px 0 0;box-shadow:inset -1px 0 0 #808080;"></div>
<span class="a" style="left:115.5px;top:116px;line-height:16px;font-size:14px;font-weight:700;letter-spacing:0.24px;">Data Collection</span>
<div style="left:26px;top:134px;width:710px;height:188px;background:#d4d0c8;box-shadow:inset 1px 1px 0 #ffffff,inset -1px -1px 0 #404040,inset -2px -2px 0 #808080;"></div>
<div style="left:26px;top:320px;width:104px;height:22px;background:#d4d0c8;border:1px solid;border-color:#d4d0c8 #404040 #404040 #ffffff;border-top:none;border-radius:0 0 3px 3px;box-shadow:inset -1px -1px 0 #808080;"></div>
<span class="a" style="left:34.5px;top:326px;line-height:14px;font-size:12px;font-weight:700;letter-spacing:-0.247px;">Primary Contact</span>
<div style="left:130px;top:322px;width:119px;height:18px;background:#d4d0c8;border:1px solid;border-color:#d4d0c8 #404040 #404040 #ffffff;border-top:none;border-radius:0 0 3px 3px;box-shadow:inset -1px -1px 0 #808080;"></div>
<span class="a" style="left:136px;top:324px;line-height:14px;font-size:12px;font-weight:700;letter-spacing:-0.08px;">Secondary Contact</span>
<div style="left:30px;top:138px;width:700px;height:179px;border:1px solid #000;"></div>
<span class="a" style="left:105px;top:142px;line-height:14px;font-size:12px;letter-spacing:-0.615px;">Prefix</span>
<span class="a" style="left:169px;top:142px;line-height:14px;font-size:12px;letter-spacing:-0.767px;">First Name</span>
<span class="a" style="left:396px;top:142px;line-height:14px;font-size:12px;letter-spacing:-0.67px;">Last Name</span>
<span class="a" style="left:623px;top:142px;line-height:14px;font-size:12px;letter-spacing:-0.466px;">Suffix</span>
<span class="a" style="left:41px;top:158px;line-height:14px;font-size:12px;letter-spacing:-0.48px;">Contact</span>
<div style="left:103px;top:157px;width:60px;height:24px;background:#fff;box-shadow:inset 1px 1px 0 #808080,inset -1px -1px 0 #ffffff,inset 2px 2px 0 #404040,inset -2px -2px 0 #d4d0c8;"></div>
<span class="b" style="left:106px;top:160px;line-height:16px;font-size:15px;letter-spacing:-0.422px;">Mr.</span>
<div style="left:165px;top:157px;width:225px;height:24px;background:#fff;box-shadow:inset 1px 1px 0 #808080,inset -1px -1px 0 #ffffff,inset 2px 2px 0 #404040,inset -2px -2px 0 #d4d0c8;"></div>
<span class="b" style="left:168px;top:160px;line-height:16px;font-size:15px;letter-spacing:-0.672px;">Bob</span>
<div style="left:392px;top:157px;width:225px;height:24px;background:#fff;box-shadow:inset 1px 1px 0 #808080,inset -1px -1px 0 #ffffff,inset 2px 2px 0 #404040,inset -2px -2px 0 #d4d0c8;"></div>
<span class="b" style="left:395px;top:160px;line-height:16px;font-size:15px;letter-spacing:-0.603px;">Small</span>
<div style="left:619px;top:157px;width:61px;height:24px;background:#fff;box-shadow:inset 1px 1px 0 #808080,inset -1px -1px 0 #ffffff,inset 2px 2px 0 #404040,inset -2px -2px 0 #d4d0c8;"></div>
<span class="a" style="left:41px;top:186px;line-height:14px;font-size:12px;letter-spacing:-0.247px;">Title</span>
<div style="left:103px;top:183px;width:226px;height:24px;background:#fff;box-shadow:inset 1px 1px 0 #808080,inset -1px -1px 0 #ffffff,inset 2px 2px 0 #404040,inset -2px -2px 0 #d4d0c8;"></div>
<span class="b" style="left:106px;top:186px;line-height:16px;font-size:15px;letter-spacing:-0.166px;">Owner</span>
<span class="a" style="left:41px;top:213px;line-height:14px;font-size:12px;letter-spacing:-0.908px;">Company</span>
<div style="left:103px;top:209px;width:390px;height:24px;background:#fff;box-shadow:inset 1px 1px 0 #808080,inset -1px -1px 0 #ffffff,inset 2px 2px 0 #404040,inset -2px -2px 0 #d4d0c8;"></div>
<span class="b" style="left:106px;top:212px;line-height:16px;font-size:15px;letter-spacing:-0.321px;">Small Construction Company</span>
<span class="a" style="left:41px;top:239px;line-height:14px;font-size:12px;letter-spacing:-0.719px;">Address</span>
<div style="left:103px;top:235px;width:390px;height:24px;background:#fff;box-shadow:inset 1px 1px 0 #808080,inset -1px -1px 0 #ffffff,inset 2px 2px 0 #404040,inset -2px -2px 0 #d4d0c8;"></div>
<span class="b" style="left:106px;top:238px;line-height:16px;font-size:15px;letter-spacing:-0.269px;">12 Main St</span>
<span class="a" style="left:41px;top:266px;line-height:14px;font-size:12px;letter-spacing:-0.497px;">City, State</span>
<div style="left:103px;top:261px;width:341px;height:24px;background:#fff;box-shadow:inset 1px 1px 0 #808080,inset -1px -1px 0 #ffffff,inset 2px 2px 0 #404040,inset -2px -2px 0 #d4d0c8;"></div>
<div style="left:426px;top:263px;width:16px;height:20px;background:#d4d0c8;box-shadow:inset 1px 1px 0 #d4d0c8,inset -1px -1px 0 #404040,inset 2px 2px 0 #ffffff,inset -2px -2px 0 #808080;"></div>
<svg style="left:430px;top:271px" width="8" height="4" shape-rendering="crispEdges"><path d="M0 0h7v1h-1v1h-1v1h-1v1h-1v-1h-1v-1h-1v-1h-1z" fill="#000"/></svg>
<span class="b" style="left:110px;top:264px;line-height:16px;font-size:15px;letter-spacing:-0.026px;">Carmel</span>
<div style="left:446px;top:261px;width:47px;height:24px;background:#fff;box-shadow:inset 1px 1px 0 #808080,inset -1px -1px 0 #ffffff,inset 2px 2px 0 #404040,inset -2px -2px 0 #d4d0c8;"></div>
<div style="left:475px;top:263px;width:16px;height:20px;background:#d4d0c8;box-shadow:inset 1px 1px 0 #d4d0c8,inset -1px -1px 0 #404040,inset 2px 2px 0 #ffffff,inset -2px -2px 0 #808080;"></div>
<svg style="left:479px;top:271px" width="8" height="4" shape-rendering="crispEdges"><path d="M0 0h7v1h-1v1h-1v1h-1v1h-1v-1h-1v-1h-1v-1h-1z" fill="#000"/></svg>
<span class="b" style="left:450px;top:264px;line-height:16px;font-size:15px;letter-spacing:0.078px;">CA</span>
<span class="a" style="left:41px;top:291px;line-height:14px;font-size:12px;letter-spacing:-0.588px;">Zip Code</span>
<div style="left:103px;top:287px;width:54px;height:24px;background:#fff;box-shadow:inset 1px 1px 0 #808080,inset -1px -1px 0 #ffffff,inset 2px 2px 0 #404040,inset -2px -2px 0 #d4d0c8;"></div>
<span class="b" style="left:106px;top:290px;line-height:16px;font-size:15px;letter-spacing:-0.5px;">99888</span>
<div style="left:159px;top:287px;width:39px;height:24px;background:#fff;box-shadow:inset 1px 1px 0 #808080,inset -1px -1px 0 #ffffff,inset 2px 2px 0 #404040,inset -2px -2px 0 #d4d0c8;"></div>
<span class="a" style="left:204px;top:291px;line-height:14px;font-size:12px;letter-spacing:-0.504px;">Type</span>
<div style="left:236px;top:287px;width:35px;height:24px;background:#fff;box-shadow:inset 1px 1px 0 #808080,inset -1px -1px 0 #ffffff,inset 2px 2px 0 #404040,inset -2px -2px 0 #d4d0c8;"></div>
<div style="left:253px;top:289px;width:16px;height:20px;background:#d4d0c8;box-shadow:inset 1px 1px 0 #d4d0c8,inset -1px -1px 0 #404040,inset 2px 2px 0 #ffffff,inset -2px -2px 0 #808080;"></div>
<svg style="left:257px;top:297px" width="8" height="4" shape-rendering="crispEdges"><path d="M0 0h7v1h-1v1h-1v1h-1v1h-1v-1h-1v-1h-1v-1h-1z" fill="#000"/></svg>
<span class="a" style="left:290px;top:291px;line-height:14px;font-size:12px;letter-spacing:-0.656px;">Time Zone</span>
<div style="left:351px;top:287px;width:142px;height:24px;background:#fff;box-shadow:inset 1px 1px 0 #808080,inset -1px -1px 0 #ffffff,inset 2px 2px 0 #404040,inset -2px -2px 0 #d4d0c8;"></div>
<div style="left:475px;top:289px;width:16px;height:20px;background:#d4d0c8;box-shadow:inset 1px 1px 0 #d4d0c8,inset -1px -1px 0 #404040,inset 2px 2px 0 #ffffff,inset -2px -2px 0 #808080;"></div>
<svg style="left:479px;top:297px" width="8" height="4" shape-rendering="crispEdges"><path d="M0 0h7v1h-1v1h-1v1h-1v1h-1v-1h-1v-1h-1v-1h-1z" fill="#000"/></svg>
<span class="a" style="left:496px;top:213px;line-height:14px;font-size:12px;letter-spacing:-0.741px;">Phone</span>
<div style="left:531px;top:209px;width:29px;height:24px;background:#fff;box-shadow:inset 1px 1px 0 #808080,inset -1px -1px 0 #ffffff,inset 2px 2px 0 #404040,inset -2px -2px 0 #d4d0c8;"></div>
<span class="b" style="left:534px;top:212px;line-height:16px;font-size:15px;letter-spacing:-0.167px;">999</span>
<div style="left:561px;top:209px;width:59px;height:24px;background:#fff;box-shadow:inset 1px 1px 0 #808080,inset -1px -1px 0 #ffffff,inset 2px 2px 0 #404040,inset -2px -2px 0 #d4d0c8;"></div>
<span class="b" style="left:563px;top:212px;line-height:16px;font-size:15px;letter-spacing:-0.312px;">123-4567</span>
<span class="a" style="left:624px;top:213px;line-height:14px;font-size:12px;letter-spacing:-0.634px;">Extension</span>
<div style="left:682px;top:209px;width:41px;height:24px;background:#fff;box-shadow:inset 1px 1px 0 #808080,inset -1px -1px 0 #ffffff,inset 2px 2px 0 #404040,inset -2px -2px 0 #d4d0c8;"></div>
<span class="a" style="left:496px;top:239px;line-height:14px;font-size:12px;letter-spacing:-1.005px;">Fax</span>
<div style="left:531px;top:235px;width:29px;height:24px;background:#fff;box-shadow:inset 1px 1px 0 #808080,inset -1px -1px 0 #ffffff,inset 2px 2px 0 #404040,inset -2px -2px 0 #d4d0c8;"></div>
<div style="left:561px;top:235px;width:59px;height:24px;background:#fff;box-shadow:inset 1px 1px 0 #808080,inset -1px -1px 0 #ffffff,inset 2px 2px 0 #404040,inset -2px -2px 0 #d4d0c8;"></div>
<span class="a" style="left:624px;top:239px;line-height:14px;font-size:12px;letter-spacing:-0.636px;">Fax Status</span>
<div style="left:688px;top:235px;width:36px;height:24px;background:#fff;box-shadow:inset 1px 1px 0 #808080,inset -1px -1px 0 #ffffff,inset 2px 2px 0 #404040,inset -2px -2px 0 #d4d0c8;"></div>
<div style="left:706px;top:237px;width:16px;height:20px;background:#d4d0c8;box-shadow:inset 1px 1px 0 #d4d0c8,inset -1px -1px 0 #404040,inset 2px 2px 0 #ffffff,inset -2px -2px 0 #808080;"></div>
<svg style="left:710px;top:245px" width="8" height="4" shape-rendering="crispEdges"><path d="M0 0h7v1h-1v1h-1v1h-1v1h-1v-1h-1v-1h-1v-1h-1z" fill="#000"/></svg>
<span class="b" style="left:692px;top:239px;line-height:16px;font-size:15px;letter-spacing:-0.338px;">0</span>
<span class="a" style="left:496px;top:266px;line-height:14px;font-size:12px;letter-spacing:-0.803px;">Email</span>
<div style="left:531px;top:261px;width:193px;height:24px;background:#fff;box-shadow:inset 1px 1px 0 #808080,inset -1px -1px 0 #ffffff,inset 2px 2px 0 #404040,inset -2px -2px 0 #d4d0c8;"></div>
<span class="b" style="left:534px;top:264px;line-height:16px;font-size:15px;letter-spacing:-0.196px;">bob@yahoo.com</span>
<span class="a" style="left:624px;top:291px;line-height:14px;font-size:12px;letter-spacing:-0.697px;">Email Status</span>
<div style="left:688px;top:287px;width:36px;height:24px;background:#fff;box-shadow:inset 1px 1px 0 #808080,inset -1px -1px 0 #ffffff,inset 2px 2px 0 #404040,inset -2px -2px 0 #d4d0c8;"></div>
<div style="left:706px;top:289px;width:16px;height:20px;background:#d4d0c8;box-shadow:inset 1px 1px 0 #d4d0c8,inset -1px -1px 0 #404040,inset 2px 2px 0 #ffffff,inset -2px -2px 0 #808080;"></div>
<svg style="left:710px;top:297px" width="8" height="4" shape-rendering="crispEdges"><path d="M0 0h7v1h-1v1h-1v1h-1v1h-1v-1h-1v-1h-1v-1h-1z" fill="#000"/></svg>
<span class="b" style="left:692px;top:291px;line-height:16px;font-size:15px;letter-spacing:-0.338px;">1</span>
<div style="left:742px;top:137px;width:246px;height:196px;border:1px solid #000;"></div>
<span class="a" style="left:750px;top:145px;line-height:14px;font-size:12px;font-weight:700;letter-spacing:0.138px;">Case ID</span>
<div style="left:807px;top:141px;width:77px;height:24px;background:#d4d0c8;box-shadow:inset 1px 1px 0 #808080,inset -1px -1px 0 #ffffff,inset 2px 2px 0 #404040,inset -2px -2px 0 #d4d0c8;"></div>
<span class="b" style="left:810px;top:144px;line-height:16px;font-size:15px;letter-spacing:-0.5px;">060192350</span>
<div style="left:890px;top:145px;width:13px;height:13px;background:#fff;box-shadow:inset 1px 1px 0 #808080,inset -1px -1px 0 #ffffff,inset 2px 2px 0 #404040,inset -2px -2px 0 #d4d0c8;"></div>
<span class="a" style="left:908px;top:146px;line-height:14px;font-size:12px;letter-spacing:-0.583px;">Don't Print Data</span>
<span class="a" style="left:750px;top:172px;line-height:14px;font-size:12px;letter-spacing:-0.768px;">NRP Code</span>
<div style="left:848px;top:168px;width:36px;height:24px;background:#fff;box-shadow:inset 1px 1px 0 #808080,inset -1px -1px 0 #ffffff,inset 2px 2px 0 #404040,inset -2px -2px 0 #d4d0c8;"></div>
<div style="left:866px;top:170px;width:16px;height:20px;background:#d4d0c8;box-shadow:inset 1px 1px 0 #d4d0c8,inset -1px -1px 0 #404040,inset 2px 2px 0 #ffffff,inset -2px -2px 0 #808080;"></div>
<svg style="left:870px;top:178px" width="8" height="4" shape-rendering="crispEdges"><path d="M0 0h7v1h-1v1h-1v1h-1v1h-1v-1h-1v-1h-1v-1h-1z" fill="#000"/></svg>
<span class="b" style="left:853px;top:172px;line-height:16px;font-size:15px;letter-spacing:-0.338px;">1</span>
<span class="a" style="left:750px;top:199px;line-height:14px;font-size:12px;letter-spacing:-0.539px;">Pending Package</span>
<div style="left:848px;top:196px;width:36px;height:24px;background:#fff;box-shadow:inset 1px 1px 0 #808080,inset -1px -1px 0 #ffffff,inset 2px 2px 0 #404040,inset -2px -2px 0 #d4d0c8;"></div>
<div style="left:866px;top:198px;width:16px;height:20px;background:#d4d0c8;box-shadow:inset 1px 1px 0 #d4d0c8,inset -1px -1px 0 #404040,inset 2px 2px 0 #ffffff,inset -2px -2px 0 #808080;"></div>
<svg style="left:870px;top:206px" width="8" height="4" shape-rendering="crispEdges"><path d="M0 0h7v1h-1v1h-1v1h-1v1h-1v-1h-1v-1h-1v-1h-1z" fill="#000"/></svg>
<span class="a" style="left:750px;top:226px;line-height:14px;font-size:12px;letter-spacing:-0.65px;">Preferred Delivery</span>
<div style="left:848px;top:223px;width:36px;height:24px;background:#fff;box-shadow:inset 1px 1px 0 #808080,inset -1px -1px 0 #ffffff,inset 2px 2px 0 #404040,inset -2px -2px 0 #d4d0c8;"></div>
<div style="left:866px;top:225px;width:16px;height:20px;background:#d4d0c8;box-shadow:inset 1px 1px 0 #d4d0c8,inset -1px -1px 0 #404040,inset 2px 2px 0 #ffffff,inset -2px -2px 0 #808080;"></div>
<svg style="left:870px;top:233px" width="8" height="4" shape-rendering="crispEdges"><path d="M0 0h7v1h-1v1h-1v1h-1v1h-1v-1h-1v-1h-1v-1h-1z" fill="#000"/></svg>
<span class="a" style="left:750px;top:253px;line-height:14px;font-size:12px;letter-spacing:-0.432px;">Advance Notice</span>
<div style="left:848px;top:250px;width:36px;height:24px;background:#fff;box-shadow:inset 1px 1px 0 #808080,inset -1px -1px 0 #ffffff,inset 2px 2px 0 #404040,inset -2px -2px 0 #d4d0c8;"></div>
<div style="left:866px;top:252px;width:16px;height:20px;background:#d4d0c8;box-shadow:inset 1px 1px 0 #d4d0c8,inset -1px -1px 0 #404040,inset 2px 2px 0 #ffffff,inset -2px -2px 0 #808080;"></div>
<svg style="left:870px;top:260px" width="8" height="4" shape-rendering="crispEdges"><path d="M0 0h7v1h-1v1h-1v1h-1v1h-1v-1h-1v-1h-1v-1h-1z" fill="#000"/></svg>
<span class="a" style="left:750px;top:278px;line-height:14px;font-size:12px;letter-spacing:-0.461px;">Dcc Code</span>
<div style="left:814px;top:276px;width:70px;height:24px;background:#fff;box-shadow:inset 1px 1px 0 #808080,inset -1px -1px 0 #ffffff,inset 2px 2px 0 #404040,inset -2px -2px 0 #d4d0c8;"></div>
<span class="b" style="left:818px;top:279px;line-height:16px;font-size:15px;letter-spacing:-0.5px;">71</span>
<span class="a" style="left:750px;top:309px;line-height:14px;font-size:12px;letter-spacing:-0.707px;">Refusal Conversion</span>
<div style="left:844px;top:304px;width:40px;height:24px;background:#fff;box-shadow:inset 1px 1px 0 #808080,inset -1px -1px 0 #ffffff,inset 2px 2px 0 #404040,inset -2px -2px 0 #d4d0c8;"></div>
<div style="left:866px;top:306px;width:16px;height:20px;background:#d4d0c8;box-shadow:inset 1px 1px 0 #d4d0c8,inset -1px -1px 0 #404040,inset 2px 2px 0 #ffffff,inset -2px -2px 0 #808080;"></div>
<svg style="left:870px;top:314px" width="8" height="4" shape-rendering="crispEdges"><path d="M0 0h7v1h-1v1h-1v1h-1v1h-1v-1h-1v-1h-1v-1h-1z" fill="#000"/></svg>
<span class="a" style="left:900px;top:173px;line-height:14px;font-size:12px;letter-spacing:-0.29px;">ENR pk#</span>
<div style="left:955px;top:170px;width:25px;height:24px;background:#d4d0c8;box-shadow:inset 1px 1px 0 #808080,inset -1px -1px 0 #ffffff,inset 2px 2px 0 #404040,inset -2px -2px 0 #d4d0c8;"></div>
<span class="b" style="left:964px;top:173px;line-height:16px;font-size:15px;letter-spacing:-0.338px;">0</span>
<span class="a" style="left:900px;top:199px;line-height:14px;font-size:12px;letter-spacing:-0.241px;">TDE pk#</span>
<div style="left:955px;top:196px;width:25px;height:24px;background:#d4d0c8;box-shadow:inset 1px 1px 0 #808080,inset -1px -1px 0 #ffffff,inset 2px 2px 0 #404040,inset -2px -2px 0 #d4d0c8;"></div>
<span class="b" style="left:964px;top:199px;line-height:16px;font-size:15px;letter-spacing:-0.338px;">0</span>
<span class="a" style="left:900px;top:226px;line-height:14px;font-size:12px;letter-spacing:-0.288px;">WEB pk#</span>
<div style="left:955px;top:222px;width:25px;height:24px;background:#d4d0c8;box-shadow:inset 1px 1px 0 #808080,inset -1px -1px 0 #ffffff,inset 2px 2px 0 #404040,inset -2px -2px 0 #d4d0c8;"></div>
<span class="b" style="left:964px;top:225px;line-height:16px;font-size:15px;letter-spacing:-0.338px;">1</span>
<span class="a" style="left:900px;top:253px;line-height:14px;font-size:12px;letter-spacing:-0.275px;">EML pk#</span>
<div style="left:955px;top:249px;width:25px;height:24px;background:#d4d0c8;box-shadow:inset 1px 1px 0 #808080,inset -1px -1px 0 #ffffff,inset 2px 2px 0 #404040,inset -2px -2px 0 #d4d0c8;"></div>
<span class="a" style="left:900px;top:278px;line-height:14px;font-size:12px;letter-spacing:-0.516px;">Refusal Panel #</span>
<div style="left:897px;top:295px;width:64px;height:25px;background:#d4d0c8;box-shadow:inset 1px 1px 0 #808080,inset -1px -1px 0 #ffffff,inset 2px 2px 0 #404040,inset -2px -2px 0 #d4d0c8;"></div>
<div style="left:26px;top:345px;width:957px;height:110px;background:#808080;box-shadow:inset 1px 1px 0 #808080,inset -1px -1px 0 #ffffff,inset 2px 2px 0 #404040,inset -2px -2px 0 #d4d0c8;"></div>
<div style="left:28px;top:347px;width:953px;height:19px;background:#d4d0c8;"></div>
<div style="left:28px;top:366px;width:953px;height:18px;background:#0a246a;"></div>
<div style="left:28px;top:347px;width:20px;height:19px;box-shadow:inset 1px 1px 0 #ffffff,inset -1px -1px 0 #808080;overflow:hidden;"></div>
<div style="left:47px;top:366px;width:1px;height:18px;background:#d4d0c8;"></div>
<div style="left:48px;top:347px;width:40px;height:19px;box-shadow:inset 1px 1px 0 #ffffff,inset -1px -1px 0 #808080;overflow:hidden;"></div>
<span class="b" style="left:58.05px;top:349px;line-height:16px;font-size:15px;letter-spacing:-0.469px;">DC</span>
<div style="left:87px;top:366px;width:1px;height:18px;background:#d4d0c8;"></div>
<span class="b" style="left:51px;top:367px;line-height:16px;font-size:15px;color:#fff;letter-spacing:-0.338px;">99</span>
<div style="left:88px;top:347px;width:80px;height:19px;box-shadow:inset 1px 1px 0 #ffffff,inset -1px -1px 0 #808080;overflow:hidden;"></div>
<span class="b" style="left:105.91px;top:349px;line-height:16px;font-size:15px;letter-spacing:-0.297px;">Unit ID</span>
<div style="left:167px;top:366px;width:1px;height:18px;background:#d4d0c8;"></div>
<span class="b" style="left:95.77px;top:367px;line-height:16px;font-size:15px;color:#fff;letter-spacing:-0.338px;">060192350</span>
<div style="left:168px;top:347px;width:80px;height:19px;box-shadow:inset 1px 1px 0 #ffffff,inset -1px -1px 0 #808080;overflow:hidden;"></div>
<span class="b" style="left:172.81px;top:349px;line-height:16px;font-size:15px;letter-spacing:-0.302px;">Report With</span>
<div style="left:247px;top:366px;width:1px;height:18px;background:#d4d0c8;"></div>
<span class="b" style="left:175.77px;top:367px;line-height:16px;font-size:15px;color:#fff;letter-spacing:-0.338px;">060192350</span>
<div style="left:248px;top:347px;width:42px;height:19px;box-shadow:inset 1px 1px 0 #ffffff,inset -1px -1px 0 #808080;overflow:hidden;"></div>
<span class="b" style="left:256.66px;top:349px;line-height:16px;font-size:15px;letter-spacing:-0.388px;">Agg</span>
<div style="left:289px;top:366px;width:1px;height:18px;background:#d4d0c8;"></div>
<div style="left:290px;top:347px;width:45px;height:19px;box-shadow:inset 1px 1px 0 #ffffff,inset -1px -1px 0 #808080;overflow:hidden;"></div>
<span class="b" style="left:293.0px;top:349px;line-height:16px;font-size:15px;letter-spacing:-0.306px;">Panel#</span>
<div style="left:334px;top:366px;width:1px;height:18px;background:#d4d0c8;"></div>
<span class="b" style="left:298.18px;top:367px;line-height:16px;font-size:15px;color:#fff;letter-spacing:-0.338px;">0073</span>
<div style="left:335px;top:347px;width:60px;height:19px;box-shadow:inset 1px 1px 0 #ffffff,inset -1px -1px 0 #808080;overflow:hidden;"></div>
<span class="b" style="left:343.5px;top:349px;line-height:16px;font-size:15px;letter-spacing:-0.405px;">NAICS</span>
<div style="left:394px;top:366px;width:1px;height:18px;background:#d4d0c8;"></div>
<span class="b" style="left:343.77px;top:367px;line-height:16px;font-size:15px;color:#fff;letter-spacing:-0.333px;">238911</span>
<div style="left:395px;top:347px;width:35px;height:19px;box-shadow:inset 1px 1px 0 #ffffff,inset -1px -1px 0 #808080;overflow:hidden;"></div>
<span class="b" style="left:398.57px;top:349px;line-height:16px;font-size:15px;letter-spacing:-0.438px;">Own</span>
<div style="left:429px;top:366px;width:1px;height:18px;background:#d4d0c8;"></div>
<span class="b" style="left:408.92px;top:367px;line-height:16px;font-size:15px;color:#fff;letter-spacing:-0.338px;">5</span>
<div style="left:430px;top:347px;width:35px;height:19px;box-shadow:inset 1px 1px 0 #ffffff,inset -1px -1px 0 #808080;overflow:hidden;"></div>
<span class="b" style="left:431.97px;top:349px;line-height:16px;font-size:15px;letter-spacing:-0.366px;">Form</span>
<div style="left:464px;top:366px;width:1px;height:18px;background:#d4d0c8;"></div>
<span class="b" style="left:442.72px;top:367px;line-height:16px;font-size:15px;color:#fff;letter-spacing:-0.451px;">B</span>
<div style="left:465px;top:347px;width:35px;height:19px;box-shadow:inset 1px 1px 0 #ffffff,inset -1px -1px 0 #808080;overflow:hidden;"></div>
<span class="b" style="left:470.17px;top:349px;line-height:16px;font-size:15px;letter-spacing:-0.291px;">Size</span>
<div style="left:499px;top:366px;width:1px;height:18px;background:#d4d0c8;"></div>
<span class="b" style="left:478.92px;top:367px;line-height:16px;font-size:15px;color:#fff;letter-spacing:-0.338px;">3</span>
<div style="left:500px;top:347px;width:75px;height:19px;box-shadow:inset 1px 1px 0 #ffffff,inset -1px -1px 0 #808080;overflow:hidden;"></div>
<span class="b" style="left:504.6px;top:349px;line-height:16px;font-size:15px;letter-spacing:-0.345px;">Av Ann AE</span>
<div style="left:574px;top:366px;width:1px;height:18px;background:#d4d0c8;"></div>
<div style="left:575px;top:347px;width:75px;height:19px;box-shadow:inset 1px 1px 0 #ffffff,inset -1px -1px 0 #808080;overflow:hidden;"></div>
<span class="b" style="left:579.68px;top:349px;line-height:16px;font-size:15px;letter-spacing:-0.344px;">UI Number</span>
<div style="left:649px;top:366px;width:1px;height:18px;background:#d4d0c8;"></div>
<span class="b" style="left:576.69px;top:367px;line-height:16px;font-size:15px;color:#fff;letter-spacing:-0.338px;">1234567890</span>
<div style="left:650px;top:347px;width:40px;height:19px;box-shadow:inset 1px 1px 0 #ffffff,inset -1px -1px 0 #808080;overflow:hidden;"></div>
<span class="b" style="left:654.88px;top:349px;line-height:16px;font-size:15px;letter-spacing:-0.475px;">RUN</span>
<div style="left:689px;top:366px;width:1px;height:18px;background:#d4d0c8;"></div>
<span class="b" style="left:652.1px;top:367px;line-height:16px;font-size:15px;color:#fff;letter-spacing:-0.338px;">00000</span>
<div style="left:690px;top:347px;width:70px;height:19px;box-shadow:inset 1px 1px 0 #ffffff,inset -1px -1px 0 #808080;overflow:hidden;"></div>
<span class="b" style="left:692.98px;top:349px;line-height:16px;font-size:15px;letter-spacing:-0.335px;">EI Number</span>
<div style="left:759px;top:366px;width:1px;height:18px;background:#d4d0c8;"></div>
<span class="b" style="left:692.77px;top:367px;line-height:16px;font-size:15px;color:#fff;letter-spacing:-0.338px;">123456789</span>
<div style="left:760px;top:347px;width:40px;height:19px;box-shadow:inset 1px 1px 0 #ffffff,inset -1px -1px 0 #808080;overflow:hidden;"></div>
<span class="b" style="left:764.47px;top:349px;line-height:16px;font-size:15px;letter-spacing:-0.488px;">MSA</span>
<div style="left:799px;top:366px;width:1px;height:18px;background:#d4d0c8;"></div>
<div style="left:800px;top:347px;width:50px;height:19px;box-shadow:inset 1px 1px 0 #ffffff,inset -1px -1px 0 #808080;overflow:hidden;"></div>
<span class="b" style="left:803.9px;top:349px;line-height:16px;font-size:15px;letter-spacing:-0.331px;">County</span>
<div style="left:849px;top:366px;width:1px;height:18px;background:#d4d0c8;"></div>
<span class="b" style="left:814.26px;top:367px;line-height:16px;font-size:15px;color:#fff;letter-spacing:-0.337px;">995</span>
<div style="left:850px;top:347px;width:50px;height:19px;box-shadow:inset 1px 1px 0 #ffffff,inset -1px -1px 0 #808080;overflow:hidden;"></div>
<span class="b" style="left:852.51px;top:349px;line-height:16px;font-size:15px;letter-spacing:-0.303px;">City Cd</span>
<div style="left:899px;top:366px;width:1px;height:18px;background:#d4d0c8;"></div>
<span class="b" style="left:864.26px;top:367px;line-height:16px;font-size:15px;color:#fff;letter-spacing:-0.337px;">000</span>
<div style="left:900px;top:347px;width:70px;height:19px;box-shadow:inset 1px 1px 0 #ffffff,inset -1px -1px 0 #808080;overflow:hidden;"></div>
<span class="b" style="left:901.77px;top:349px;line-height:16px;font-size:15px;letter-spacing:-0.348px;">Samp Code</span>
<div style="left:969px;top:366px;width:1px;height:18px;background:#d4d0c8;"></div>
<span class="b" style="left:931.42px;top:367px;line-height:16px;font-size:15px;color:#fff;letter-spacing:-0.338px;">2</span>
<div style="left:970px;top:347px;width:11px;height:19px;box-shadow:inset 1px 1px 0 #ffffff,inset -1px -1px 0 #808080;overflow:hidden;"></div>
<div style="left:970px;top:348px;width:11px;height:18px;overflow:hidden;"><span class="b" style="left:1px;top:1px;line-height:16px;font-size:15px;letter-spacing:-0.3px">Sa</span></div>
<div style="left:980px;top:366px;width:1px;height:18px;background:#d4d0c8;"></div>
<div style="left:28px;top:383px;width:953px;height:1px;background:#808080;"></div>
<div style="left:28px;top:366px;width:19px;height:17px;background:#fff;"></div>
<svg style="left:29px;top:369px" width="16" height="13" shape-rendering="crispEdges"><rect x="7" y="0" width="3" height="1" fill="#000"/><rect x="8" y="1" width="3" height="1" fill="#000"/><rect x="9" y="2" width="3" height="1" fill="#000"/><rect x="10" y="3" width="3" height="1" fill="#000"/><rect x="11" y="4" width="3" height="1" fill="#000"/><rect x="0" y="5" width="15" height="1" fill="#000"/><rect x="0" y="6" width="16" height="1" fill="#000"/><rect x="0" y="7" width="15" height="1" fill="#000"/><rect x="11" y="8" width="3" height="1" fill="#000"/><rect x="10" y="9" width="3" height="1" fill="#000"/><rect x="9" y="10" width="3" height="1" fill="#000"/><rect x="8" y="11" width="3" height="1" fill="#000"/><rect x="7" y="12" width="3" height="1" fill="#000"/></svg>
<div style="left:28px;top:438px;width:953px;height:16px;background-color:#fff;background-image:linear-gradient(45deg,#d4d0c8 25%,transparent 25%,transparent 75%,#d4d0c8 75%),linear-gradient(45deg,#d4d0c8 25%,transparent 25%,transparent 75%,#d4d0c8 75%);background-size:2px 2px;background-position:0 0,1px 1px;"></div>
<div style="left:28px;top:438px;width:16px;height:16px;background:#d4d0c8;box-shadow:inset 1px 1px 0 #d4d0c8,inset -1px -1px 0 #404040,inset 2px 2px 0 #ffffff,inset -2px -2px 0 #808080;"></div>
<div style="left:965px;top:438px;width:16px;height:16px;background:#d4d0c8;box-shadow:inset 1px 1px 0 #d4d0c8,inset -1px -1px 0 #404040,inset 2px 2px 0 #ffffff,inset -2px -2px 0 #808080;"></div>
<svg style="left:33px;top:442px" width="4" height="7" shape-rendering="crispEdges"><path d="M3 0h1v7h-1zM2 1h1v5h-1zM1 2h1v3h-1zM0 3h1v1h-1z" fill="#000"/></svg>
<svg style="left:971px;top:442px" width="4" height="7" shape-rendering="crispEdges"><path d="M0 0h1v7h-1zM1 1h1v5h-1zM2 2h1v3h-1zM3 3h1v1h-1z" fill="#000"/></svg>
<div style="left:44px;top:438px;width:378px;height:16px;background:#d4d0c8;box-shadow:inset 1px 1px 0 #d4d0c8,inset -1px -1px 0 #404040,inset 2px 2px 0 #ffffff,inset -2px -2px 0 #808080;"></div>
<div style="left:49px;top:459px;width:40px;height:25px;background:#fff;box-shadow:inset 1px 1px 0 #808080,inset -1px -1px 0 #ffffff,inset 2px 2px 0 #404040,inset -2px -2px 0 #d4d0c8;"></div>
<div style="left:71px;top:461px;width:16px;height:21px;background:#d4d0c8;box-shadow:inset 1px 1px 0 #d4d0c8,inset -1px -1px 0 #404040,inset 2px 2px 0 #ffffff,inset -2px -2px 0 #808080;"></div>
<svg style="left:75px;top:469px" width="8" height="4" shape-rendering="crispEdges"><path d="M0 0h7v1h-1v1h-1v1h-1v1h-1v-1h-1v-1h-1v-1h-1z" fill="#000"/></svg>
<span class="b" style="left:53px;top:463px;line-height:16px;font-size:15px;letter-spacing:-0.5px;">00</span>
<div style="left:98px;top:458px;width:160px;height:23px;background:#d4d0c8;box-shadow:inset 1px 1px 0 #ffffff,inset -1px -1px 0 #404040,inset 2px 2px 0 #d4d0c8,inset -2px -2px 0 #808080;"></div>
<span class="a" style="left:112px;top:462px;line-height:14px;font-size:12px;font-weight:700;letter-spacing:-0.392px;">&lt;&lt; Assign DC to All Units</span>
<div style="left:314px;top:458px;width:177px;height:23px;background:#d4d0c8;box-shadow:inset 1px 1px 0 #ffffff,inset -1px -1px 0 #404040,inset 2px 2px 0 #d4d0c8,inset -2px -2px 0 #808080;"></div>
<span class="a" style="left:347.5px;top:463px;line-height:14px;font-size:12px;font-weight:700;color:#fff;letter-spacing:-0.431px;">Enrollment Complete</span>
<span class="a" style="left:346.5px;top:462px;line-height:14px;font-size:12px;font-weight:700;color:#808080;letter-spacing:-0.431px;">Enrollment Complete</span>
<div style="left:530px;top:458px;width:85px;height:23px;background:#d4d0c8;box-shadow:inset 1px 1px 0 #ffffff,inset -1px -1px 0 #404040,inset 2px 2px 0 #d4d0c8,inset -2px -2px 0 #808080;"></div>
<span class="a" style="left:546px;top:462px;line-height:14px;font-size:12px;font-weight:700;letter-spacing:-0.207px;">Zoom Out</span>
<span class="a" style="left:915.5px;top:464px;line-height:14px;font-size:12px;font-weight:700;letter-spacing:-0.195px;">1 of 1 units</span>
<div style="left:26px;top:485px;width:970px;height:195px;background:#d4d0c8;box-shadow:inset 1px 1px 0 #ffffff,inset -1px -1px 0 #404040,inset -2px -2px 0 #808080;"></div>
<div style="left:28px;top:680px;width:95px;height:18px;background:#d4d0c8;border:1px solid;border-color:#d4d0c8 #404040 #404040 #ffffff;border-top:none;border-radius:0 0 3px 3px;box-shadow:inset -1px -1px 0 #808080;"></div>
<span class="a" style="left:34.5px;top:682px;line-height:14px;font-size:12px;font-weight:700;letter-spacing:-0.221px;">Unit Addresses</span>
<div style="left:124px;top:678px;width:64px;height:21px;background:#d4d0c8;box-shadow:inset -1px 0 0 #404040,inset -2px 0 0 #808080;"></div>
<div style="left:123px;top:680px;width:1px;height:19px;background:#ffffff;"></div>
<span class="a" style="left:131.5px;top:685px;line-height:14px;font-size:12px;font-weight:700;letter-spacing:-0.017px;">Unit Info</span>
<div style="left:30px;top:488px;width:273px;height:189px;border:1px solid #000;"></div>
<span class="a" style="left:40px;top:497px;line-height:14px;font-size:12px;letter-spacing:-0.527px;">Unit ID</span>
<div style="left:103px;top:491px;width:77px;height:24px;background:#d4d0c8;box-shadow:inset 1px 1px 0 #808080,inset -1px -1px 0 #ffffff,inset 2px 2px 0 #404040,inset -2px -2px 0 #d4d0c8;"></div>
<span class="b" style="left:106px;top:494px;line-height:16px;font-size:15px;letter-spacing:-0.5px;">060192350</span>
<span class="a" style="left:203.5px;top:496px;line-height:14px;font-size:12px;font-weight:700;letter-spacing:-0.413px;">Physical Address</span>
<span class="a" style="left:40px;top:523px;line-height:14px;font-size:12px;letter-spacing:-0.908px;">Company</span>
<div style="left:103px;top:518px;width:193px;height:24px;background:#fff;box-shadow:inset 1px 1px 0 #808080,inset -1px -1px 0 #ffffff,inset 2px 2px 0 #404040,inset -2px -2px 0 #d4d0c8;"></div>
<span class="b" style="left:106px;top:521px;line-height:16px;font-size:15px;letter-spacing:-0.321px;">Small Construction Company</span>
<span class="a" style="left:40px;top:550px;line-height:14px;font-size:12px;letter-spacing:-0.754px;">Sec Name</span>
<div style="left:103px;top:544px;width:193px;height:24px;background:#fff;box-shadow:inset 1px 1px 0 #808080,inset -1px -1px 0 #ffffff,inset 2px 2px 0 #404040,inset -2px -2px 0 #d4d0c8;"></div>
<span class="b" style="left:106px;top:547px;line-height:16px;font-size:15px;letter-spacing:-0.321px;">Small Construction Company</span>
<span class="a" style="left:40px;top:576px;line-height:14px;font-size:12px;letter-spacing:-0.422px;">Location</span>
<div style="left:103px;top:570px;width:193px;height:24px;background:#fff;box-shadow:inset 1px 1px 0 #808080,inset -1px -1px 0 #ffffff,inset 2px 2px 0 #404040,inset -2px -2px 0 #d4d0c8;"></div>
<span class="a" style="left:40px;top:601px;line-height:14px;font-size:12px;letter-spacing:-0.719px;">Address</span>
<div style="left:103px;top:596px;width:193px;height:24px;background:#fff;box-shadow:inset 1px 1px 0 #808080,inset -1px -1px 0 #ffffff,inset 2px 2px 0 #404040,inset -2px -2px 0 #d4d0c8;"></div>
<span class="b" style="left:106px;top:599px;line-height:16px;font-size:15px;letter-spacing:-0.269px;">12 Main St</span>
<span class="a" style="left:40px;top:628px;line-height:14px;font-size:12px;letter-spacing:-0.497px;">City, State</span>
<div style="left:103px;top:622px;width:142px;height:24px;background:#fff;box-shadow:inset 1px 1px 0 #808080,inset -1px -1px 0 #ffffff,inset 2px 2px 0 #404040,inset -2px -2px 0 #d4d0c8;"></div>
<div style="left:227px;top:624px;width:16px;height:20px;background:#d4d0c8;box-shadow:inset 1px 1px 0 #d4d0c8,inset -1px -1px 0 #404040,inset 2px 2px 0 #ffffff,inset -2px -2px 0 #808080;"></div>
<svg style="left:231px;top:632px" width="8" height="4" shape-rendering="crispEdges"><path d="M0 0h7v1h-1v1h-1v1h-1v1h-1v-1h-1v-1h-1v-1h-1z" fill="#000"/></svg>
<span class="b" style="left:110px;top:625px;line-height:16px;font-size:15px;letter-spacing:-0.193px;">Carmel</span>
<div style="left:250px;top:622px;width:45px;height:24px;background:#fff;box-shadow:inset 1px 1px 0 #808080,inset -1px -1px 0 #ffffff,inset 2px 2px 0 #404040,inset -2px -2px 0 #d4d0c8;"></div>
<div style="left:277px;top:624px;width:16px;height:20px;background:#d4d0c8;box-shadow:inset 1px 1px 0 #d4d0c8,inset -1px -1px 0 #404040,inset 2px 2px 0 #ffffff,inset -2px -2px 0 #808080;"></div>
<svg style="left:281px;top:632px" width="8" height="4" shape-rendering="crispEdges"><path d="M0 0h7v1h-1v1h-1v1h-1v1h-1v-1h-1v-1h-1v-1h-1z" fill="#000"/></svg>
<span class="b" style="left:253px;top:625px;line-height:16px;font-size:15px;letter-spacing:0.078px;">CA</span>
<span class="a" style="left:40px;top:652px;line-height:14px;font-size:12px;letter-spacing:-0.588px;">Zip Code</span>
<div style="left:103px;top:648px;width:54px;height:24px;background:#fff;box-shadow:inset 1px 1px 0 #808080,inset -1px -1px 0 #ffffff,inset 2px 2px 0 #404040,inset -2px -2px 0 #d4d0c8;"></div>
<span class="b" style="left:106px;top:651px;line-height:16px;font-size:15px;letter-spacing:-0.7px;">99888</span>
<div style="left:159px;top:648px;width:39px;height:24px;background:#fff;box-shadow:inset 1px 1px 0 #808080,inset -1px -1px 0 #ffffff,inset 2px 2px 0 #404040,inset -2px -2px 0 #d4d0c8;"></div>
<span class="a" style="left:231px;top:652px;line-height:14px;font-size:12px;letter-spacing:-0.504px;">Type</span>
<div style="left:261px;top:648px;width:34px;height:24px;background:#fff;box-shadow:inset 1px 1px 0 #808080,inset -1px -1px 0 #ffffff,inset 2px 2px 0 #404040,inset -2px -2px 0 #d4d0c8;"></div>
<div style="left:277px;top:650px;width:16px;height:20px;background:#d4d0c8;box-shadow:inset 1px 1px 0 #d4d0c8,inset -1px -1px 0 #404040,inset 2px 2px 0 #ffffff,inset -2px -2px 0 #808080;"></div>
<svg style="left:281px;top:658px" width="8" height="4" shape-rendering="crispEdges"><path d="M0 0h7v1h-1v1h-1v1h-1v1h-1v-1h-1v-1h-1v-1h-1z" fill="#000"/></svg>
<div style="left:308px;top:488px;width:291px;height:189px;border:1px solid #000;"></div>
<span class="a" style="left:313px;top:497px;line-height:14px;font-size:12px;letter-spacing:-0.796px;">Panel Number, Sub Sample</span>
<div style="left:444px;top:491px;width:62px;height:24px;background:#d4d0c8;box-shadow:inset 1px 1px 0 #808080,inset -1px -1px 0 #ffffff,inset 2px 2px 0 #404040,inset -2px -2px 0 #d4d0c8;"></div>
<span class="b" style="left:447px;top:494px;line-height:16px;font-size:15px;letter-spacing:-0.5px;">0073</span>
<div style="left:508px;top:491px;width:21px;height:24px;background:#d4d0c8;box-shadow:inset 1px 1px 0 #808080,inset -1px -1px 0 #ffffff,inset 2px 2px 0 #404040,inset -2px -2px 0 #d4d0c8;"></div>
<span class="a" style="left:313px;top:523px;line-height:14px;font-size:12px;letter-spacing:-0.724px;">County, City, MSA, CMI</span>
<div style="left:444px;top:518px;width:27px;height:24px;background:#fff;box-shadow:inset 1px 1px 0 #808080,inset -1px -1px 0 #ffffff,inset 2px 2px 0 #404040,inset -2px -2px 0 #d4d0c8;"></div>
<span class="b" style="left:447px;top:521px;line-height:16px;font-size:15px;letter-spacing:-0.5px;">995</span>
<div style="left:473px;top:518px;width:26px;height:24px;background:#fff;box-shadow:inset 1px 1px 0 #808080,inset -1px -1px 0 #ffffff,inset 2px 2px 0 #404040,inset -2px -2px 0 #d4d0c8;"></div>
<span class="b" style="left:476px;top:521px;line-height:16px;font-size:15px;letter-spacing:-0.5px;">000</span>
<div style="left:501px;top:518px;width:39px;height:24px;background:#fff;box-shadow:inset 1px 1px 0 #808080,inset -1px -1px 0 #ffffff,inset 2px 2px 0 #404040,inset -2px -2px 0 #d4d0c8;"></div>
<div style="left:542px;top:518px;width:21px;height:24px;background:#d4d0c8;box-shadow:inset 1px 1px 0 #808080,inset -1px -1px 0 #ffffff,inset 2px 2px 0 #404040,inset -2px -2px 0 #d4d0c8;"></div>
<span class="b" style="left:546px;top:521px;line-height:16px;font-size:15px;letter-spacing:-0.5px;">16</span>
<span class="a" style="left:313px;top:550px;line-height:14px;font-size:12px;letter-spacing:-0.805px;">NAICS, Own, Size, Form</span>
<div style="left:444px;top:544px;width:49px;height:24px;background:#fff;box-shadow:inset 1px 1px 0 #808080,inset -1px -1px 0 #ffffff,inset 2px 2px 0 #404040,inset -2px -2px 0 #d4d0c8;"></div>
<span class="b" style="left:447px;top:547px;line-height:16px;font-size:15px;letter-spacing:-0.409px;">238911</span>
<div style="left:496px;top:544px;width:34px;height:24px;background:#fff;box-shadow:inset 1px 1px 0 #808080,inset -1px -1px 0 #ffffff,inset 2px 2px 0 #404040,inset -2px -2px 0 #d4d0c8;"></div>
<div style="left:512px;top:546px;width:16px;height:20px;background:#d4d0c8;box-shadow:inset 1px 1px 0 #d4d0c8,inset -1px -1px 0 #404040,inset 2px 2px 0 #ffffff,inset -2px -2px 0 #808080;"></div>
<svg style="left:516px;top:554px" width="8" height="4" shape-rendering="crispEdges"><path d="M0 0h7v1h-1v1h-1v1h-1v1h-1v-1h-1v-1h-1v-1h-1z" fill="#000"/></svg>
<span class="b" style="left:500px;top:547px;line-height:16px;font-size:15px;letter-spacing:-0.338px;">5</span>
<div style="left:533px;top:544px;width:33px;height:24px;background:#fff;box-shadow:inset 1px 1px 0 #808080,inset -1px -1px 0 #ffffff,inset 2px 2px 0 #404040,inset -2px -2px 0 #d4d0c8;"></div>
<div style="left:548px;top:546px;width:16px;height:20px;background:#d4d0c8;box-shadow:inset 1px 1px 0 #d4d0c8,inset -1px -1px 0 #404040,inset 2px 2px 0 #ffffff,inset -2px -2px 0 #808080;"></div>
<svg style="left:552px;top:554px" width="8" height="4" shape-rendering="crispEdges"><path d="M0 0h7v1h-1v1h-1v1h-1v1h-1v-1h-1v-1h-1v-1h-1z" fill="#000"/></svg>
<span class="b" style="left:537px;top:547px;line-height:16px;font-size:15px;letter-spacing:-0.338px;">3</span>
<div style="left:570px;top:544px;width:25px;height:24px;background:#d4d0c8;box-shadow:inset 1px 1px 0 #808080,inset -1px -1px 0 #ffffff,inset 2px 2px 0 #404040,inset -2px -2px 0 #d4d0c8;"></div>
<span class="b" style="left:573px;top:547px;line-height:16px;font-size:15px;letter-spacing:-0.451px;">B</span>
<span class="a" style="left:313px;top:576px;line-height:14px;font-size:12px;letter-spacing:-0.72px;">EI Number, Aux, MEEI</span>
<div style="left:444px;top:570px;width:70px;height:24px;background:#fff;box-shadow:inset 1px 1px 0 #808080,inset -1px -1px 0 #ffffff,inset 2px 2px 0 #404040,inset -2px -2px 0 #d4d0c8;"></div>
<span class="b" style="left:447px;top:573px;line-height:16px;font-size:15px;letter-spacing:-0.5px;">123456789</span>
<div style="left:516px;top:570px;width:34px;height:24px;background:#fff;box-shadow:inset 1px 1px 0 #808080,inset -1px -1px 0 #ffffff,inset 2px 2px 0 #404040,inset -2px -2px 0 #d4d0c8;"></div>
<div style="left:532px;top:572px;width:16px;height:20px;background:#d4d0c8;box-shadow:inset 1px 1px 0 #d4d0c8,inset -1px -1px 0 #404040,inset 2px 2px 0 #ffffff,inset -2px -2px 0 #808080;"></div>
<svg style="left:536px;top:580px" width="8" height="4" shape-rendering="crispEdges"><path d="M0 0h7v1h-1v1h-1v1h-1v1h-1v-1h-1v-1h-1v-1h-1z" fill="#000"/></svg>
<span class="b" style="left:521px;top:573px;line-height:16px;font-size:15px;letter-spacing:-0.338px;">5</span>
<div style="left:554px;top:570px;width:18px;height:24px;background:#d4d0c8;box-shadow:inset 1px 1px 0 #808080,inset -1px -1px 0 #ffffff,inset 2px 2px 0 #404040,inset -2px -2px 0 #d4d0c8;"></div>
<span class="b" style="left:558px;top:573px;line-height:16px;font-size:15px;letter-spacing:-0.338px;">1</span>
<span class="a" style="left:313px;top:601px;line-height:14px;font-size:12px;letter-spacing:-0.717px;">UI Number, RUN</span>
<div style="left:444px;top:596px;width:77px;height:24px;background:#fff;box-shadow:inset 1px 1px 0 #808080,inset -1px -1px 0 #ffffff,inset 2px 2px 0 #404040,inset -2px -2px 0 #d4d0c8;"></div>
<span class="b" style="left:447px;top:599px;line-height:16px;font-size:15px;letter-spacing:-0.5px;">1234567890</span>
<div style="left:523px;top:596px;width:42px;height:24px;background:#fff;box-shadow:inset 1px 1px 0 #808080,inset -1px -1px 0 #ffffff,inset 2px 2px 0 #404040,inset -2px -2px 0 #d4d0c8;"></div>
<span class="b" style="left:527px;top:599px;line-height:16px;font-size:15px;letter-spacing:-0.5px;">00000</span>
<span class="a" style="left:313px;top:628px;line-height:14px;font-size:12px;letter-spacing:-0.761px;">Sample Code, Unit Code</span>
<div style="left:444px;top:622px;width:35px;height:24px;background:#fff;box-shadow:inset 1px 1px 0 #808080,inset -1px -1px 0 #ffffff,inset 2px 2px 0 #404040,inset -2px -2px 0 #d4d0c8;"></div>
<div style="left:461px;top:624px;width:16px;height:20px;background:#d4d0c8;box-shadow:inset 1px 1px 0 #d4d0c8,inset -1px -1px 0 #404040,inset 2px 2px 0 #ffffff,inset -2px -2px 0 #808080;"></div>
<svg style="left:465px;top:632px" width="8" height="4" shape-rendering="crispEdges"><path d="M0 0h7v1h-1v1h-1v1h-1v1h-1v-1h-1v-1h-1v-1h-1z" fill="#000"/></svg>
<span class="b" style="left:448px;top:625px;line-height:16px;font-size:15px;letter-spacing:-0.338px;">2</span>
<div style="left:482px;top:622px;width:69px;height:24px;background:#fff;box-shadow:inset 1px 1px 0 #808080,inset -1px -1px 0 #ffffff,inset 2px 2px 0 #404040,inset -2px -2px 0 #d4d0c8;"></div>
<span class="b" style="left:486px;top:625px;line-height:16px;font-size:15px;">AL</span>
<span class="a" style="left:313px;top:652px;line-height:14px;font-size:12px;letter-spacing:-0.774px;">Pr Lopp, Cm Lopp</span>
<div style="left:444px;top:648px;width:35px;height:24px;background:#d4d0c8;box-shadow:inset 1px 1px 0 #808080,inset -1px -1px 0 #ffffff,inset 2px 2px 0 #404040,inset -2px -2px 0 #d4d0c8;"></div>
<div style="left:461px;top:650px;width:16px;height:20px;background:#d4d0c8;box-shadow:inset 1px 1px 0 #d4d0c8,inset -1px -1px 0 #404040,inset 2px 2px 0 #ffffff,inset -2px -2px 0 #808080;"></div>
<svg style="left:466px;top:659px" width="8" height="4" shape-rendering="crispEdges"><path d="M0 0h7v1h-1v1h-1v1h-1v1h-1v-1h-1v-1h-1v-1h-1z" fill="#fff"/></svg>
<svg style="left:465px;top:658px" width="8" height="4" shape-rendering="crispEdges"><path d="M0 0h7v1h-1v1h-1v1h-1v1h-1v-1h-1v-1h-1v-1h-1z" fill="#808080"/></svg>
<span class="b" style="left:448px;top:651px;line-height:16px;font-size:15px;letter-spacing:-0.338px;">1</span>
<div style="left:482px;top:648px;width:35px;height:24px;background:#d4d0c8;box-shadow:inset 1px 1px 0 #808080,inset -1px -1px 0 #ffffff,inset 2px 2px 0 #404040,inset -2px -2px 0 #d4d0c8;"></div>
<div style="left:499px;top:650px;width:16px;height:20px;background:#d4d0c8;box-shadow:inset 1px 1px 0 #d4d0c8,inset -1px -1px 0 #404040,inset 2px 2px 0 #ffffff,inset -2px -2px 0 #808080;"></div>
<svg style="left:504px;top:659px" width="8" height="4" shape-rendering="crispEdges"><path d="M0 0h7v1h-1v1h-1v1h-1v1h-1v-1h-1v-1h-1v-1h-1z" fill="#fff"/></svg>
<svg style="left:503px;top:658px" width="8" height="4" shape-rendering="crispEdges"><path d="M0 0h7v1h-1v1h-1v1h-1v1h-1v-1h-1v-1h-1v-1h-1z" fill="#808080"/></svg>
<span class="b" style="left:485px;top:651px;line-height:16px;font-size:15px;letter-spacing:-0.338px;">0</span>
<div style="left:602px;top:488px;width:389px;height:189px;border:1px solid #000;"></div>
<span class="a" style="left:611px;top:494px;line-height:14px;font-size:12px;font-weight:700;letter-spacing:-0.086px;">QUI Data</span>
<span class="a" style="left:695px;top:495px;line-height:14px;font-size:12px;letter-spacing:-0.659px;">Average Annual AE</span>
<div style="left:794px;top:490px;width:69px;height:24px;background:#d4d0c8;box-shadow:inset 1px 1px 0 #808080,inset -1px -1px 0 #ffffff,inset 2px 2px 0 #404040,inset -2px -2px 0 #d4d0c8;"></div>
<div style="left:608px;top:516px;width:384px;height:156px;background:#fff;box-shadow:inset 1px 1px 0 #808080,inset -1px -1px 0 #ffffff,inset 2px 2px 0 #404040,inset -2px -2px 0 #d4d0c8;"></div>
<div style="left:610px;top:518px;width:365px;height:17px;background:#d4d0c8;"></div>
<div style="left:610px;top:518px;width:65px;height:17px;box-shadow:inset 1px 1px 0 #ffffff,inset -1px -1px 0 #808080;"></div>
<span class="b" style="left:613.0px;top:520px;line-height:14px;font-size:12px;letter-spacing:0.155px;">Month/Year</span>
<div style="left:675px;top:518px;width:60px;height:17px;box-shadow:inset 1px 1px 0 #ffffff,inset -1px -1px 0 #808080;"></div>
<span class="b" style="left:697.0px;top:520px;line-height:14px;font-size:12px;">AE</span>
<div style="left:735px;top:518px;width:60px;height:17px;box-shadow:inset 1px 1px 0 #ffffff,inset -1px -1px 0 #808080;"></div>
<span class="b" style="left:743.0px;top:520px;line-height:14px;font-size:12px;letter-spacing:0.094px;">AE  IMP</span>
<div style="left:795px;top:518px;width:60px;height:17px;box-shadow:inset 1px 1px 0 #ffffff,inset -1px -1px 0 #808080;"></div>
<span class="b" style="left:812.5px;top:520px;line-height:14px;font-size:12px;letter-spacing:-0.508px;">Wage</span>
<div style="left:855px;top:518px;width:60px;height:17px;box-shadow:inset 1px 1px 0 #ffffff,inset -1px -1px 0 #808080;"></div>
<span class="b" style="left:858.0px;top:520px;line-height:14px;font-size:12px;letter-spacing:-0.04px;">Wage  IMP</span>
<div style="left:915px;top:518px;width:60px;height:17px;box-shadow:inset 1px 1px 0 #ffffff,inset -1px -1px 0 #808080;"></div>
<span class="b" style="left:922.0px;top:520px;line-height:14px;font-size:12px;letter-spacing:-0.192px;">Comment</span>
<div style="left:610px;top:535px;width:365px;height:17px;background:#0a246a;"></div>
<div style="left:674px;top:535px;width:1px;height:17px;background:#d4d0c8;"></div>
<div style="left:734px;top:535px;width:1px;height:17px;background:#d4d0c8;"></div>
<div style="left:794px;top:535px;width:1px;height:17px;background:#d4d0c8;"></div>
<div style="left:854px;top:535px;width:1px;height:17px;background:#d4d0c8;"></div>
<div style="left:914px;top:535px;width:1px;height:17px;background:#d4d0c8;"></div>
<div style="left:974px;top:535px;width:1px;height:17px;background:#d4d0c8;"></div>
<div style="left:610px;top:551px;width:365px;height:1px;background:#d4d0c8;"></div>
<span class="b" style="left:619.02px;top:536px;line-height:16px;font-size:15px;color:#fff;letter-spacing:-0.316px;">03/2002</span>
<span class="b" style="left:697.84px;top:536px;line-height:16px;font-size:15px;color:#fff;letter-spacing:-0.338px;">19</span>
<span class="b" style="left:760.22px;top:536px;line-height:16px;font-size:15px;color:#fff;letter-spacing:-0.451px;">R</span>
<span class="b" style="left:803.51px;top:536px;line-height:16px;font-size:15px;color:#fff;letter-spacing:-0.337px;">101462</span>
<span class="b" style="left:880.22px;top:536px;line-height:16px;font-size:15px;color:#fff;letter-spacing:-0.451px;">R</span>
<div style="left:674px;top:552px;width:1px;height:17px;background:#d4d0c8;"></div>
<div style="left:734px;top:552px;width:1px;height:17px;background:#d4d0c8;"></div>
<div style="left:794px;top:552px;width:1px;height:17px;background:#d4d0c8;"></div>
<div style="left:854px;top:552px;width:1px;height:17px;background:#d4d0c8;"></div>
<div style="left:914px;top:552px;width:1px;height:17px;background:#d4d0c8;"></div>
<div style="left:974px;top:552px;width:1px;height:17px;background:#d4d0c8;"></div>
<div style="left:610px;top:568px;width:365px;height:1px;background:#d4d0c8;"></div>
<span class="b" style="left:619.02px;top:553px;line-height:16px;font-size:15px;letter-spacing:-0.316px;">02/2002</span>
<span class="b" style="left:697.84px;top:553px;line-height:16px;font-size:15px;letter-spacing:-0.338px;">19</span>
<span class="b" style="left:760.22px;top:553px;line-height:16px;font-size:15px;letter-spacing:-0.451px;">R</span>
<div style="left:674px;top:569px;width:1px;height:17px;background:#d4d0c8;"></div>
<div style="left:734px;top:569px;width:1px;height:17px;background:#d4d0c8;"></div>
<div style="left:794px;top:569px;width:1px;height:17px;background:#d4d0c8;"></div>
<div style="left:854px;top:569px;width:1px;height:17px;background:#d4d0c8;"></div>
<div style="left:914px;top:569px;width:1px;height:17px;background:#d4d0c8;"></div>
<div style="left:974px;top:569px;width:1px;height:17px;background:#d4d0c8;"></div>
<div style="left:610px;top:585px;width:365px;height:1px;background:#d4d0c8;"></div>
<span class="b" style="left:619.02px;top:570px;line-height:16px;font-size:15px;letter-spacing:-0.316px;">01/2002</span>
<span class="b" style="left:697.84px;top:570px;line-height:16px;font-size:15px;letter-spacing:-0.338px;">19</span>
<span class="b" style="left:760.22px;top:570px;line-height:16px;font-size:15px;letter-spacing:-0.451px;">R</span>
<div style="left:674px;top:586px;width:1px;height:17px;background:#d4d0c8;"></div>
<div style="left:734px;top:586px;width:1px;height:17px;background:#d4d0c8;"></div>
<div style="left:794px;top:586px;width:1px;height:17px;background:#d4d0c8;"></div>
<div style="left:854px;top:586px;width:1px;height:17px;background:#d4d0c8;"></div>
<div style="left:914px;top:586px;width:1px;height:17px;background:#d4d0c8;"></div>
<div style="left:974px;top:586px;width:1px;height:17px;background:#d4d0c8;"></div>
<div style="left:610px;top:602px;width:365px;height:1px;background:#d4d0c8;"></div>
<span class="b" style="left:619.02px;top:587px;line-height:16px;font-size:15px;letter-spacing:-0.316px;">12/2001</span>
<span class="b" style="left:697.84px;top:587px;line-height:16px;font-size:15px;letter-spacing:-0.338px;">18</span>
<span class="b" style="left:760.22px;top:587px;line-height:16px;font-size:15px;letter-spacing:-0.451px;">R</span>
<span class="b" style="left:803.51px;top:587px;line-height:16px;font-size:15px;letter-spacing:-0.337px;">109300</span>
<span class="b" style="left:880.22px;top:587px;line-height:16px;font-size:15px;letter-spacing:-0.451px;">R</span>
<div style="left:674px;top:603px;width:1px;height:17px;background:#d4d0c8;"></div>
<div style="left:734px;top:603px;width:1px;height:17px;background:#d4d0c8;"></div>
<div style="left:794px;top:603px;width:1px;height:17px;background:#d4d0c8;"></div>
<div style="left:854px;top:603px;width:1px;height:17px;background:#d4d0c8;"></div>
<div style="left:914px;top:603px;width:1px;height:17px;background:#d4d0c8;"></div>
<div style="left:974px;top:603px;width:1px;height:17px;background:#d4d0c8;"></div>
<div style="left:610px;top:619px;width:365px;height:1px;background:#d4d0c8;"></div>
<span class="b" style="left:619.28px;top:604px;line-height:16px;font-size:15px;letter-spacing:-0.313px;">11/2001</span>
<span class="b" style="left:697.84px;top:604px;line-height:16px;font-size:15px;letter-spacing:-0.338px;">18</span>
<span class="b" style="left:760.22px;top:604px;line-height:16px;font-size:15px;letter-spacing:-0.451px;">R</span>
<div style="left:674px;top:620px;width:1px;height:17px;background:#d4d0c8;"></div>
<div style="left:734px;top:620px;width:1px;height:17px;background:#d4d0c8;"></div>
<div style="left:794px;top:620px;width:1px;height:17px;background:#d4d0c8;"></div>
<div style="left:854px;top:620px;width:1px;height:17px;background:#d4d0c8;"></div>
<div style="left:914px;top:620px;width:1px;height:17px;background:#d4d0c8;"></div>
<div style="left:974px;top:620px;width:1px;height:17px;background:#d4d0c8;"></div>
<div style="left:610px;top:636px;width:365px;height:1px;background:#d4d0c8;"></div>
<span class="b" style="left:619.02px;top:621px;line-height:16px;font-size:15px;letter-spacing:-0.316px;">10/2001</span>
<span class="b" style="left:697.84px;top:621px;line-height:16px;font-size:15px;letter-spacing:-0.338px;">18</span>
<span class="b" style="left:760.22px;top:621px;line-height:16px;font-size:15px;letter-spacing:-0.451px;">R</span>
<div style="left:674px;top:637px;width:1px;height:17px;background:#d4d0c8;"></div>
<div style="left:734px;top:637px;width:1px;height:17px;background:#d4d0c8;"></div>
<div style="left:794px;top:637px;width:1px;height:17px;background:#d4d0c8;"></div>
<div style="left:854px;top:637px;width:1px;height:17px;background:#d4d0c8;"></div>
<div style="left:914px;top:637px;width:1px;height:17px;background:#d4d0c8;"></div>
<div style="left:974px;top:637px;width:1px;height:17px;background:#d4d0c8;"></div>
<div style="left:610px;top:653px;width:365px;height:1px;background:#d4d0c8;"></div>
<span class="b" style="left:619.02px;top:638px;line-height:16px;font-size:15px;letter-spacing:-0.316px;">09/2001</span>
<div style="left:674px;top:654px;width:1px;height:16px;background:#d4d0c8;"></div>
<div style="left:734px;top:654px;width:1px;height:16px;background:#d4d0c8;"></div>
<div style="left:794px;top:654px;width:1px;height:16px;background:#d4d0c8;"></div>
<div style="left:854px;top:654px;width:1px;height:16px;background:#d4d0c8;"></div>
<div style="left:914px;top:654px;width:1px;height:16px;background:#d4d0c8;"></div>
<div style="left:974px;top:654px;width:1px;height:16px;background:#d4d0c8;"></div>
<span class="b" style="left:619.02px;top:655px;line-height:16px;font-size:15px;letter-spacing:-0.316px;">08/2001</span>
<div style="left:975px;top:518px;width:15px;height:152px;background-color:#fff;background-image:linear-gradient(45deg,#d4d0c8 25%,transparent 25%,transparent 75%,#d4d0c8 75%),linear-gradient(45deg,#d4d0c8 25%,transparent 25%,transparent 75%,#d4d0c8 75%);background-size:2px 2px;background-position:0 0,1px 1px;"></div>
<div style="left:975px;top:518px;width:15px;height:16px;background:#d4d0c8;box-shadow:inset 1px 1px 0 #d4d0c8,inset -1px -1px 0 #404040,inset 2px 2px 0 #ffffff,inset -2px -2px 0 #808080;"></div>
<div style="left:975px;top:654px;width:15px;height:16px;background:#d4d0c8;box-shadow:inset 1px 1px 0 #d4d0c8,inset -1px -1px 0 #404040,inset 2px 2px 0 #ffffff,inset -2px -2px 0 #808080;"></div>
<svg style="left:978px;top:524px" width="7" height="4" shape-rendering="crispEdges"><path d="M3 0h1v1h1v1h1v1h1v1h-7v-1h1v-1h1v-1h1z" fill="#000"/></svg>
<svg style="left:978px;top:660px" width="8" height="4" shape-rendering="crispEdges"><path d="M0 0h7v1h-1v1h-1v1h-1v1h-1v-1h-1v-1h-1v-1h-1z" fill="#000"/></svg>
<div style="left:975px;top:534px;width:15px;height:82px;background:#d4d0c8;box-shadow:inset 1px 1px 0 #d4d0c8,inset -1px -1px 0 #404040,inset 2px 2px 0 #ffffff,inset -2px -2px 0 #808080;"></div>
</div>
</body></html>
